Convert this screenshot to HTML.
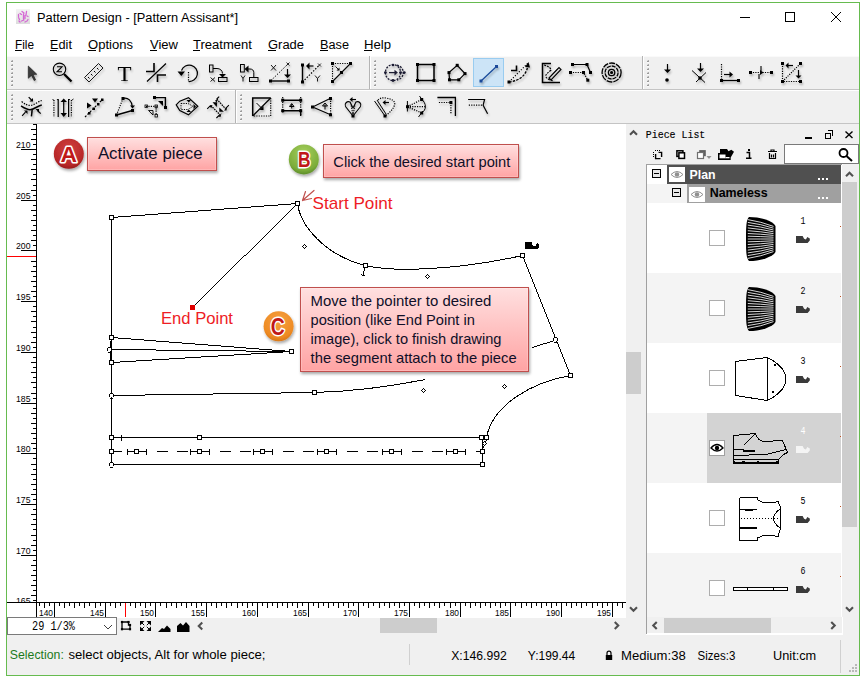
<!DOCTYPE html>
<html><head><meta charset="utf-8"><style>
html,body{margin:0;padding:0;background:#fff;}
svg{display:block;}
</style></head><body>
<svg width="868" height="681" viewBox="0 0 868 681" shape-rendering="auto">
<rect x="0" y="0" width="868" height="681" fill="#fff" />
<rect x="7" y="56" width="852" height="68" fill="#f0f0f0" />
<g shape-rendering="crispEdges">
<rect x="7" y="56" width="852" height="1" fill="#fafafa" />
<rect x="7" y="89" width="852" height="1" fill="#c4c4c4" />
<rect x="7" y="90" width="852" height="1" fill="#ffffff" />
<rect x="7" y="123" width="852" height="1" fill="#c4c4c4" />
<rect x="369" y="56" width="1" height="33" fill="#b4b4b4" />
<rect x="370" y="56" width="1" height="33" fill="#ffffff" />
<rect x="642" y="56" width="1" height="33" fill="#b4b4b4" />
<rect x="643" y="56" width="1" height="33" fill="#ffffff" />
<rect x="235" y="90" width="1" height="33" fill="#b4b4b4" />
<rect x="236" y="90" width="1" height="33" fill="#ffffff" />
<rect x="11" y="61" width="2" height="1" fill="#9a9a9a"/><rect x="12" y="60" width="1" height="1" fill="#b0b0b0"/><rect x="11" y="60" width="1" height="1" fill="#dadada"/><rect x="11" y="62" width="2" height="1" fill="#fafafa"/>
<rect x="11" y="65" width="2" height="1" fill="#9a9a9a"/><rect x="12" y="64" width="1" height="1" fill="#b0b0b0"/><rect x="11" y="64" width="1" height="1" fill="#dadada"/><rect x="11" y="66" width="2" height="1" fill="#fafafa"/>
<rect x="11" y="69" width="2" height="1" fill="#9a9a9a"/><rect x="12" y="68" width="1" height="1" fill="#b0b0b0"/><rect x="11" y="68" width="1" height="1" fill="#dadada"/><rect x="11" y="70" width="2" height="1" fill="#fafafa"/>
<rect x="11" y="73" width="2" height="1" fill="#9a9a9a"/><rect x="12" y="72" width="1" height="1" fill="#b0b0b0"/><rect x="11" y="72" width="1" height="1" fill="#dadada"/><rect x="11" y="74" width="2" height="1" fill="#fafafa"/>
<rect x="11" y="77" width="2" height="1" fill="#9a9a9a"/><rect x="12" y="76" width="1" height="1" fill="#b0b0b0"/><rect x="11" y="76" width="1" height="1" fill="#dadada"/><rect x="11" y="78" width="2" height="1" fill="#fafafa"/>
<rect x="11" y="81" width="2" height="1" fill="#9a9a9a"/><rect x="12" y="80" width="1" height="1" fill="#b0b0b0"/><rect x="11" y="80" width="1" height="1" fill="#dadada"/><rect x="11" y="82" width="2" height="1" fill="#fafafa"/>
<rect x="11" y="85" width="2" height="1" fill="#9a9a9a"/><rect x="12" y="84" width="1" height="1" fill="#b0b0b0"/><rect x="11" y="84" width="1" height="1" fill="#dadada"/><rect x="11" y="86" width="2" height="1" fill="#fafafa"/>
<rect x="374" y="61" width="2" height="1" fill="#9a9a9a"/><rect x="375" y="60" width="1" height="1" fill="#b0b0b0"/><rect x="374" y="60" width="1" height="1" fill="#dadada"/><rect x="374" y="62" width="2" height="1" fill="#fafafa"/>
<rect x="374" y="65" width="2" height="1" fill="#9a9a9a"/><rect x="375" y="64" width="1" height="1" fill="#b0b0b0"/><rect x="374" y="64" width="1" height="1" fill="#dadada"/><rect x="374" y="66" width="2" height="1" fill="#fafafa"/>
<rect x="374" y="69" width="2" height="1" fill="#9a9a9a"/><rect x="375" y="68" width="1" height="1" fill="#b0b0b0"/><rect x="374" y="68" width="1" height="1" fill="#dadada"/><rect x="374" y="70" width="2" height="1" fill="#fafafa"/>
<rect x="374" y="73" width="2" height="1" fill="#9a9a9a"/><rect x="375" y="72" width="1" height="1" fill="#b0b0b0"/><rect x="374" y="72" width="1" height="1" fill="#dadada"/><rect x="374" y="74" width="2" height="1" fill="#fafafa"/>
<rect x="374" y="77" width="2" height="1" fill="#9a9a9a"/><rect x="375" y="76" width="1" height="1" fill="#b0b0b0"/><rect x="374" y="76" width="1" height="1" fill="#dadada"/><rect x="374" y="78" width="2" height="1" fill="#fafafa"/>
<rect x="374" y="81" width="2" height="1" fill="#9a9a9a"/><rect x="375" y="80" width="1" height="1" fill="#b0b0b0"/><rect x="374" y="80" width="1" height="1" fill="#dadada"/><rect x="374" y="82" width="2" height="1" fill="#fafafa"/>
<rect x="374" y="85" width="2" height="1" fill="#9a9a9a"/><rect x="375" y="84" width="1" height="1" fill="#b0b0b0"/><rect x="374" y="84" width="1" height="1" fill="#dadada"/><rect x="374" y="86" width="2" height="1" fill="#fafafa"/>
<rect x="647" y="61" width="2" height="1" fill="#9a9a9a"/><rect x="648" y="60" width="1" height="1" fill="#b0b0b0"/><rect x="647" y="60" width="1" height="1" fill="#dadada"/><rect x="647" y="62" width="2" height="1" fill="#fafafa"/>
<rect x="647" y="65" width="2" height="1" fill="#9a9a9a"/><rect x="648" y="64" width="1" height="1" fill="#b0b0b0"/><rect x="647" y="64" width="1" height="1" fill="#dadada"/><rect x="647" y="66" width="2" height="1" fill="#fafafa"/>
<rect x="647" y="69" width="2" height="1" fill="#9a9a9a"/><rect x="648" y="68" width="1" height="1" fill="#b0b0b0"/><rect x="647" y="68" width="1" height="1" fill="#dadada"/><rect x="647" y="70" width="2" height="1" fill="#fafafa"/>
<rect x="647" y="73" width="2" height="1" fill="#9a9a9a"/><rect x="648" y="72" width="1" height="1" fill="#b0b0b0"/><rect x="647" y="72" width="1" height="1" fill="#dadada"/><rect x="647" y="74" width="2" height="1" fill="#fafafa"/>
<rect x="647" y="77" width="2" height="1" fill="#9a9a9a"/><rect x="648" y="76" width="1" height="1" fill="#b0b0b0"/><rect x="647" y="76" width="1" height="1" fill="#dadada"/><rect x="647" y="78" width="2" height="1" fill="#fafafa"/>
<rect x="647" y="81" width="2" height="1" fill="#9a9a9a"/><rect x="648" y="80" width="1" height="1" fill="#b0b0b0"/><rect x="647" y="80" width="1" height="1" fill="#dadada"/><rect x="647" y="82" width="2" height="1" fill="#fafafa"/>
<rect x="647" y="85" width="2" height="1" fill="#9a9a9a"/><rect x="648" y="84" width="1" height="1" fill="#b0b0b0"/><rect x="647" y="84" width="1" height="1" fill="#dadada"/><rect x="647" y="86" width="2" height="1" fill="#fafafa"/>
<rect x="11" y="95" width="2" height="1" fill="#9a9a9a"/><rect x="12" y="94" width="1" height="1" fill="#b0b0b0"/><rect x="11" y="94" width="1" height="1" fill="#dadada"/><rect x="11" y="96" width="2" height="1" fill="#fafafa"/>
<rect x="11" y="99" width="2" height="1" fill="#9a9a9a"/><rect x="12" y="98" width="1" height="1" fill="#b0b0b0"/><rect x="11" y="98" width="1" height="1" fill="#dadada"/><rect x="11" y="100" width="2" height="1" fill="#fafafa"/>
<rect x="11" y="103" width="2" height="1" fill="#9a9a9a"/><rect x="12" y="102" width="1" height="1" fill="#b0b0b0"/><rect x="11" y="102" width="1" height="1" fill="#dadada"/><rect x="11" y="104" width="2" height="1" fill="#fafafa"/>
<rect x="11" y="107" width="2" height="1" fill="#9a9a9a"/><rect x="12" y="106" width="1" height="1" fill="#b0b0b0"/><rect x="11" y="106" width="1" height="1" fill="#dadada"/><rect x="11" y="108" width="2" height="1" fill="#fafafa"/>
<rect x="11" y="111" width="2" height="1" fill="#9a9a9a"/><rect x="12" y="110" width="1" height="1" fill="#b0b0b0"/><rect x="11" y="110" width="1" height="1" fill="#dadada"/><rect x="11" y="112" width="2" height="1" fill="#fafafa"/>
<rect x="11" y="115" width="2" height="1" fill="#9a9a9a"/><rect x="12" y="114" width="1" height="1" fill="#b0b0b0"/><rect x="11" y="114" width="1" height="1" fill="#dadada"/><rect x="11" y="116" width="2" height="1" fill="#fafafa"/>
<rect x="11" y="119" width="2" height="1" fill="#9a9a9a"/><rect x="12" y="118" width="1" height="1" fill="#b0b0b0"/><rect x="11" y="118" width="1" height="1" fill="#dadada"/><rect x="11" y="120" width="2" height="1" fill="#fafafa"/>
<rect x="240" y="95" width="2" height="1" fill="#9a9a9a"/><rect x="241" y="94" width="1" height="1" fill="#b0b0b0"/><rect x="240" y="94" width="1" height="1" fill="#dadada"/><rect x="240" y="96" width="2" height="1" fill="#fafafa"/>
<rect x="240" y="99" width="2" height="1" fill="#9a9a9a"/><rect x="241" y="98" width="1" height="1" fill="#b0b0b0"/><rect x="240" y="98" width="1" height="1" fill="#dadada"/><rect x="240" y="100" width="2" height="1" fill="#fafafa"/>
<rect x="240" y="103" width="2" height="1" fill="#9a9a9a"/><rect x="241" y="102" width="1" height="1" fill="#b0b0b0"/><rect x="240" y="102" width="1" height="1" fill="#dadada"/><rect x="240" y="104" width="2" height="1" fill="#fafafa"/>
<rect x="240" y="107" width="2" height="1" fill="#9a9a9a"/><rect x="241" y="106" width="1" height="1" fill="#b0b0b0"/><rect x="240" y="106" width="1" height="1" fill="#dadada"/><rect x="240" y="108" width="2" height="1" fill="#fafafa"/>
<rect x="240" y="111" width="2" height="1" fill="#9a9a9a"/><rect x="241" y="110" width="1" height="1" fill="#b0b0b0"/><rect x="240" y="110" width="1" height="1" fill="#dadada"/><rect x="240" y="112" width="2" height="1" fill="#fafafa"/>
<rect x="240" y="115" width="2" height="1" fill="#9a9a9a"/><rect x="241" y="114" width="1" height="1" fill="#b0b0b0"/><rect x="240" y="114" width="1" height="1" fill="#dadada"/><rect x="240" y="116" width="2" height="1" fill="#fafafa"/>
<rect x="240" y="119" width="2" height="1" fill="#9a9a9a"/><rect x="241" y="118" width="1" height="1" fill="#b0b0b0"/><rect x="240" y="118" width="1" height="1" fill="#dadada"/><rect x="240" y="120" width="2" height="1" fill="#fafafa"/>
<rect x="473.5" y="58.5" width="30" height="28" fill="#cce4f7" stroke="#99ccf0" stroke-width="1" />
</g>
<rect x="7" y="124" width="852" height="551" fill="#f0f0f0" />
<rect x="7" y="124" width="619" height="494" fill="#fff" />
<g>
<defs><linearGradient id="ig" x1="0" y1="0" x2="0" y2="1"><stop offset="0" stop-color="#f4f4f4"/><stop offset="1" stop-color="#dcdcdc"/></linearGradient></defs>
<rect x="16" y="9" width="14" height="15" fill="url(#ig)" />
<g stroke="#d050d0" stroke-width="1.3" fill="none" stroke-linecap="round" opacity="0.85">
<path d="M22,11.5L24,13M26.5,11.5L26,15M23.5,14V19M25,15.5V18.5M20,13.5L21.5,14.5M18.5,14.5V16.5M18.5,17.5L19.5,19.5M19,21L20,22M21.5,21L24,20M25,22L26,21.5M27,21L28,19.5M27,16L28,16.5"/>
</g>
<text x="37" y="22" font-family="Liberation Sans" font-size="12" fill="#000" font-weight="normal" text-anchor="start" textLength="201" lengthAdjust="spacingAndGlyphs" >Pattern Design - [Pattern Assisant*]</text>
<line x1="740" y1="17.5" x2="750" y2="17.5" stroke="#000" stroke-width="1" />
<rect x="785.5" y="12.5" width="9" height="9" fill="none" stroke="#000" stroke-width="1" />
<line x1="831" y1="12" x2="841" y2="22" stroke="#000" stroke-width="1" />
<line x1="841" y1="12" x2="831" y2="22" stroke="#000" stroke-width="1" />
</g>
<text x="15" y="49" font-family="Liberation Sans" font-size="12" fill="#000" font-weight="normal" text-anchor="start" textLength="19" lengthAdjust="spacingAndGlyphs" >File</text>
<rect x="15" y="50" width="7" height="1" fill="#000"/>
<text x="50" y="49" font-family="Liberation Sans" font-size="12" fill="#000" font-weight="normal" text-anchor="start" textLength="22" lengthAdjust="spacingAndGlyphs" >Edit</text>
<rect x="50" y="50" width="7" height="1" fill="#000"/>
<text x="88" y="49" font-family="Liberation Sans" font-size="12" fill="#000" font-weight="normal" text-anchor="start" textLength="45" lengthAdjust="spacingAndGlyphs" >Options</text>
<rect x="88" y="50" width="8" height="1" fill="#000"/>
<text x="150" y="49" font-family="Liberation Sans" font-size="12" fill="#000" font-weight="normal" text-anchor="start" textLength="28" lengthAdjust="spacingAndGlyphs" >View</text>
<rect x="150" y="50" width="7" height="1" fill="#000"/>
<text x="193" y="49" font-family="Liberation Sans" font-size="12" fill="#000" font-weight="normal" text-anchor="start" textLength="59" lengthAdjust="spacingAndGlyphs" >Treatment</text>
<rect x="193" y="50" width="7" height="1" fill="#000"/>
<text x="268" y="49" font-family="Liberation Sans" font-size="12" fill="#000" font-weight="normal" text-anchor="start" textLength="36" lengthAdjust="spacingAndGlyphs" >Grade</text>
<rect x="268" y="50" width="8" height="1" fill="#000"/>
<text x="320" y="49" font-family="Liberation Sans" font-size="12" fill="#000" font-weight="normal" text-anchor="start" textLength="29" lengthAdjust="spacingAndGlyphs" >Base</text>
<rect x="320" y="50" width="8" height="1" fill="#000"/>
<text x="364" y="49" font-family="Liberation Sans" font-size="12" fill="#000" font-weight="normal" text-anchor="start" textLength="27" lengthAdjust="spacingAndGlyphs" >Help</text>
<rect x="364" y="50" width="8" height="1" fill="#000"/>
<g shape-rendering="crispEdges">
<line x1="36.5" y1="124" x2="36.5" y2="617" stroke="#000" stroke-width="1" />
<line x1="7" y1="602.5" x2="626" y2="602.5" stroke="#000" stroke-width="1" />
<rect x="33" y="124" width="3" height="1" fill="#000"/>
<rect x="31" y="129" width="5" height="1" fill="#000"/>
<rect x="33" y="134" width="3" height="1" fill="#000"/>
<rect x="31" y="139" width="5" height="1" fill="#000"/>
<rect x="33" y="144" width="3" height="1" fill="#000"/>
<rect x="21" y="149" width="15" height="1" fill="#000"/>
<rect x="33" y="154" width="3" height="1" fill="#000"/>
<rect x="31" y="159" width="5" height="1" fill="#000"/>
<rect x="33" y="164" width="3" height="1" fill="#000"/>
<rect x="31" y="169" width="5" height="1" fill="#000"/>
<rect x="33" y="174" width="3" height="1" fill="#000"/>
<rect x="31" y="179" width="5" height="1" fill="#000"/>
<rect x="33" y="185" width="3" height="1" fill="#000"/>
<rect x="31" y="190" width="5" height="1" fill="#000"/>
<rect x="33" y="195" width="3" height="1" fill="#000"/>
<rect x="21" y="200" width="15" height="1" fill="#000"/>
<rect x="33" y="205" width="3" height="1" fill="#000"/>
<rect x="31" y="210" width="5" height="1" fill="#000"/>
<rect x="33" y="215" width="3" height="1" fill="#000"/>
<rect x="31" y="220" width="5" height="1" fill="#000"/>
<rect x="33" y="225" width="3" height="1" fill="#000"/>
<rect x="31" y="230" width="5" height="1" fill="#000"/>
<rect x="33" y="235" width="3" height="1" fill="#000"/>
<rect x="31" y="240" width="5" height="1" fill="#000"/>
<rect x="33" y="245" width="3" height="1" fill="#000"/>
<rect x="21" y="250" width="15" height="1" fill="#000"/>
<rect x="33" y="256" width="3" height="1" fill="#000"/>
<rect x="31" y="261" width="5" height="1" fill="#000"/>
<rect x="33" y="266" width="3" height="1" fill="#000"/>
<rect x="31" y="271" width="5" height="1" fill="#000"/>
<rect x="33" y="276" width="3" height="1" fill="#000"/>
<rect x="31" y="281" width="5" height="1" fill="#000"/>
<rect x="33" y="286" width="3" height="1" fill="#000"/>
<rect x="31" y="291" width="5" height="1" fill="#000"/>
<rect x="33" y="296" width="3" height="1" fill="#000"/>
<rect x="21" y="301" width="15" height="1" fill="#000"/>
<rect x="33" y="306" width="3" height="1" fill="#000"/>
<rect x="31" y="311" width="5" height="1" fill="#000"/>
<rect x="33" y="316" width="3" height="1" fill="#000"/>
<rect x="31" y="321" width="5" height="1" fill="#000"/>
<rect x="33" y="327" width="3" height="1" fill="#000"/>
<rect x="31" y="332" width="5" height="1" fill="#000"/>
<rect x="33" y="337" width="3" height="1" fill="#000"/>
<rect x="31" y="342" width="5" height="1" fill="#000"/>
<rect x="33" y="347" width="3" height="1" fill="#000"/>
<rect x="21" y="352" width="15" height="1" fill="#000"/>
<rect x="33" y="357" width="3" height="1" fill="#000"/>
<rect x="31" y="362" width="5" height="1" fill="#000"/>
<rect x="33" y="367" width="3" height="1" fill="#000"/>
<rect x="31" y="372" width="5" height="1" fill="#000"/>
<rect x="33" y="377" width="3" height="1" fill="#000"/>
<rect x="31" y="382" width="5" height="1" fill="#000"/>
<rect x="33" y="387" width="3" height="1" fill="#000"/>
<rect x="31" y="393" width="5" height="1" fill="#000"/>
<rect x="33" y="398" width="3" height="1" fill="#000"/>
<rect x="21" y="403" width="15" height="1" fill="#000"/>
<rect x="33" y="408" width="3" height="1" fill="#000"/>
<rect x="31" y="413" width="5" height="1" fill="#000"/>
<rect x="33" y="418" width="3" height="1" fill="#000"/>
<rect x="31" y="423" width="5" height="1" fill="#000"/>
<rect x="33" y="428" width="3" height="1" fill="#000"/>
<rect x="31" y="433" width="5" height="1" fill="#000"/>
<rect x="33" y="438" width="3" height="1" fill="#000"/>
<rect x="31" y="443" width="5" height="1" fill="#000"/>
<rect x="33" y="448" width="3" height="1" fill="#000"/>
<rect x="21" y="453" width="15" height="1" fill="#000"/>
<rect x="33" y="458" width="3" height="1" fill="#000"/>
<rect x="31" y="464" width="5" height="1" fill="#000"/>
<rect x="33" y="469" width="3" height="1" fill="#000"/>
<rect x="31" y="474" width="5" height="1" fill="#000"/>
<rect x="33" y="479" width="3" height="1" fill="#000"/>
<rect x="31" y="484" width="5" height="1" fill="#000"/>
<rect x="33" y="489" width="3" height="1" fill="#000"/>
<rect x="31" y="494" width="5" height="1" fill="#000"/>
<rect x="33" y="499" width="3" height="1" fill="#000"/>
<rect x="21" y="504" width="15" height="1" fill="#000"/>
<rect x="33" y="509" width="3" height="1" fill="#000"/>
<rect x="31" y="514" width="5" height="1" fill="#000"/>
<rect x="33" y="519" width="3" height="1" fill="#000"/>
<rect x="31" y="524" width="5" height="1" fill="#000"/>
<rect x="33" y="529" width="3" height="1" fill="#000"/>
<rect x="31" y="535" width="5" height="1" fill="#000"/>
<rect x="33" y="540" width="3" height="1" fill="#000"/>
<rect x="31" y="545" width="5" height="1" fill="#000"/>
<rect x="33" y="550" width="3" height="1" fill="#000"/>
<rect x="21" y="555" width="15" height="1" fill="#000"/>
<rect x="33" y="560" width="3" height="1" fill="#000"/>
<rect x="31" y="565" width="5" height="1" fill="#000"/>
<rect x="33" y="570" width="3" height="1" fill="#000"/>
<rect x="31" y="575" width="5" height="1" fill="#000"/>
<rect x="33" y="580" width="3" height="1" fill="#000"/>
<rect x="31" y="585" width="5" height="1" fill="#000"/>
<rect x="33" y="590" width="3" height="1" fill="#000"/>
<rect x="31" y="595" width="5" height="1" fill="#000"/>
<rect x="33" y="600" width="3" height="1" fill="#000"/>
<rect x="39" y="603" width="1" height="3" fill="#000"/>
<rect x="44" y="603" width="1" height="5" fill="#000"/>
<rect x="49" y="603" width="1" height="3" fill="#000"/>
<rect x="54" y="603" width="1" height="14" fill="#000"/>
<rect x="59" y="603" width="1" height="3" fill="#000"/>
<rect x="64" y="603" width="1" height="5" fill="#000"/>
<rect x="69" y="603" width="1" height="3" fill="#000"/>
<rect x="74" y="603" width="1" height="5" fill="#000"/>
<rect x="79" y="603" width="1" height="3" fill="#000"/>
<rect x="84" y="603" width="1" height="5" fill="#000"/>
<rect x="89" y="603" width="1" height="3" fill="#000"/>
<rect x="95" y="603" width="1" height="5" fill="#000"/>
<rect x="100" y="603" width="1" height="3" fill="#000"/>
<rect x="105" y="603" width="1" height="14" fill="#000"/>
<rect x="110" y="603" width="1" height="3" fill="#000"/>
<rect x="115" y="603" width="1" height="5" fill="#000"/>
<rect x="120" y="603" width="1" height="3" fill="#000"/>
<rect x="125" y="603" width="1" height="5" fill="#000"/>
<rect x="130" y="603" width="1" height="3" fill="#000"/>
<rect x="135" y="603" width="1" height="5" fill="#000"/>
<rect x="140" y="603" width="1" height="3" fill="#000"/>
<rect x="145" y="603" width="1" height="5" fill="#000"/>
<rect x="150" y="603" width="1" height="3" fill="#000"/>
<rect x="155" y="603" width="1" height="14" fill="#000"/>
<rect x="160" y="603" width="1" height="3" fill="#000"/>
<rect x="166" y="603" width="1" height="5" fill="#000"/>
<rect x="171" y="603" width="1" height="3" fill="#000"/>
<rect x="176" y="603" width="1" height="5" fill="#000"/>
<rect x="181" y="603" width="1" height="3" fill="#000"/>
<rect x="186" y="603" width="1" height="5" fill="#000"/>
<rect x="191" y="603" width="1" height="3" fill="#000"/>
<rect x="196" y="603" width="1" height="5" fill="#000"/>
<rect x="201" y="603" width="1" height="3" fill="#000"/>
<rect x="206" y="603" width="1" height="14" fill="#000"/>
<rect x="211" y="603" width="1" height="3" fill="#000"/>
<rect x="216" y="603" width="1" height="5" fill="#000"/>
<rect x="221" y="603" width="1" height="3" fill="#000"/>
<rect x="226" y="603" width="1" height="5" fill="#000"/>
<rect x="231" y="603" width="1" height="3" fill="#000"/>
<rect x="237" y="603" width="1" height="5" fill="#000"/>
<rect x="242" y="603" width="1" height="3" fill="#000"/>
<rect x="247" y="603" width="1" height="5" fill="#000"/>
<rect x="252" y="603" width="1" height="3" fill="#000"/>
<rect x="257" y="603" width="1" height="14" fill="#000"/>
<rect x="262" y="603" width="1" height="3" fill="#000"/>
<rect x="267" y="603" width="1" height="5" fill="#000"/>
<rect x="272" y="603" width="1" height="3" fill="#000"/>
<rect x="277" y="603" width="1" height="5" fill="#000"/>
<rect x="282" y="603" width="1" height="3" fill="#000"/>
<rect x="287" y="603" width="1" height="5" fill="#000"/>
<rect x="292" y="603" width="1" height="3" fill="#000"/>
<rect x="297" y="603" width="1" height="5" fill="#000"/>
<rect x="302" y="603" width="1" height="3" fill="#000"/>
<rect x="308" y="603" width="1" height="14" fill="#000"/>
<rect x="313" y="603" width="1" height="3" fill="#000"/>
<rect x="318" y="603" width="1" height="5" fill="#000"/>
<rect x="323" y="603" width="1" height="3" fill="#000"/>
<rect x="328" y="603" width="1" height="5" fill="#000"/>
<rect x="333" y="603" width="1" height="3" fill="#000"/>
<rect x="338" y="603" width="1" height="5" fill="#000"/>
<rect x="343" y="603" width="1" height="3" fill="#000"/>
<rect x="348" y="603" width="1" height="5" fill="#000"/>
<rect x="353" y="603" width="1" height="3" fill="#000"/>
<rect x="358" y="603" width="1" height="14" fill="#000"/>
<rect x="363" y="603" width="1" height="3" fill="#000"/>
<rect x="368" y="603" width="1" height="5" fill="#000"/>
<rect x="373" y="603" width="1" height="3" fill="#000"/>
<rect x="379" y="603" width="1" height="5" fill="#000"/>
<rect x="384" y="603" width="1" height="3" fill="#000"/>
<rect x="389" y="603" width="1" height="5" fill="#000"/>
<rect x="394" y="603" width="1" height="3" fill="#000"/>
<rect x="399" y="603" width="1" height="5" fill="#000"/>
<rect x="404" y="603" width="1" height="3" fill="#000"/>
<rect x="409" y="603" width="1" height="14" fill="#000"/>
<rect x="414" y="603" width="1" height="3" fill="#000"/>
<rect x="419" y="603" width="1" height="5" fill="#000"/>
<rect x="424" y="603" width="1" height="3" fill="#000"/>
<rect x="429" y="603" width="1" height="5" fill="#000"/>
<rect x="434" y="603" width="1" height="3" fill="#000"/>
<rect x="439" y="603" width="1" height="5" fill="#000"/>
<rect x="444" y="603" width="1" height="3" fill="#000"/>
<rect x="450" y="603" width="1" height="5" fill="#000"/>
<rect x="455" y="603" width="1" height="3" fill="#000"/>
<rect x="460" y="603" width="1" height="14" fill="#000"/>
<rect x="465" y="603" width="1" height="3" fill="#000"/>
<rect x="470" y="603" width="1" height="5" fill="#000"/>
<rect x="475" y="603" width="1" height="3" fill="#000"/>
<rect x="480" y="603" width="1" height="5" fill="#000"/>
<rect x="485" y="603" width="1" height="3" fill="#000"/>
<rect x="490" y="603" width="1" height="5" fill="#000"/>
<rect x="495" y="603" width="1" height="3" fill="#000"/>
<rect x="500" y="603" width="1" height="5" fill="#000"/>
<rect x="505" y="603" width="1" height="3" fill="#000"/>
<rect x="510" y="603" width="1" height="14" fill="#000"/>
<rect x="515" y="603" width="1" height="3" fill="#000"/>
<rect x="521" y="603" width="1" height="5" fill="#000"/>
<rect x="526" y="603" width="1" height="3" fill="#000"/>
<rect x="531" y="603" width="1" height="5" fill="#000"/>
<rect x="536" y="603" width="1" height="3" fill="#000"/>
<rect x="541" y="603" width="1" height="5" fill="#000"/>
<rect x="546" y="603" width="1" height="3" fill="#000"/>
<rect x="551" y="603" width="1" height="5" fill="#000"/>
<rect x="556" y="603" width="1" height="3" fill="#000"/>
<rect x="561" y="603" width="1" height="14" fill="#000"/>
<rect x="566" y="603" width="1" height="3" fill="#000"/>
<rect x="571" y="603" width="1" height="5" fill="#000"/>
<rect x="576" y="603" width="1" height="3" fill="#000"/>
<rect x="581" y="603" width="1" height="5" fill="#000"/>
<rect x="586" y="603" width="1" height="3" fill="#000"/>
<rect x="592" y="603" width="1" height="5" fill="#000"/>
<rect x="597" y="603" width="1" height="3" fill="#000"/>
<rect x="602" y="603" width="1" height="5" fill="#000"/>
<rect x="607" y="603" width="1" height="3" fill="#000"/>
<rect x="612" y="603" width="1" height="14" fill="#000"/>
<rect x="617" y="603" width="1" height="3" fill="#000"/>
<rect x="622" y="603" width="1" height="5" fill="#000"/>
<rect x="7" y="256" width="29" height="1" fill="#ff0000"/>
<rect x="125" y="603" width="1" height="14" fill="#ff0000"/>
</g>
<text x="16" y="147.9" font-family="Liberation Sans" font-size="8.5" fill="#000" font-weight="normal" text-anchor="start" textLength="14.5" lengthAdjust="spacingAndGlyphs" >210</text>
<text x="16" y="198.9" font-family="Liberation Sans" font-size="8.5" fill="#000" font-weight="normal" text-anchor="start" textLength="14.5" lengthAdjust="spacingAndGlyphs" >205</text>
<text x="16" y="248.9" font-family="Liberation Sans" font-size="8.5" fill="#000" font-weight="normal" text-anchor="start" textLength="14.5" lengthAdjust="spacingAndGlyphs" >200</text>
<text x="16" y="299.9" font-family="Liberation Sans" font-size="8.5" fill="#000" font-weight="normal" text-anchor="start" textLength="14.5" lengthAdjust="spacingAndGlyphs" >195</text>
<text x="16" y="350.9" font-family="Liberation Sans" font-size="8.5" fill="#000" font-weight="normal" text-anchor="start" textLength="14.5" lengthAdjust="spacingAndGlyphs" >190</text>
<text x="16" y="401.9" font-family="Liberation Sans" font-size="8.5" fill="#000" font-weight="normal" text-anchor="start" textLength="14.5" lengthAdjust="spacingAndGlyphs" >185</text>
<text x="16" y="451.9" font-family="Liberation Sans" font-size="8.5" fill="#000" font-weight="normal" text-anchor="start" textLength="14.5" lengthAdjust="spacingAndGlyphs" >180</text>
<text x="16" y="502.9" font-family="Liberation Sans" font-size="8.5" fill="#000" font-weight="normal" text-anchor="start" textLength="14.5" lengthAdjust="spacingAndGlyphs" >175</text>
<text x="16" y="553.9" font-family="Liberation Sans" font-size="8.5" fill="#000" font-weight="normal" text-anchor="start" textLength="14.5" lengthAdjust="spacingAndGlyphs" >170</text>
<svg x="7" y="590" width="29" height="12" overflow="hidden"><text x="9" y="14.200000000000045" font-family="Liberation Sans" font-size="8.5" fill="#000" textLength="14.5" lengthAdjust="spacingAndGlyphs">165</text></svg>
<text x="39" y="616" font-family="Liberation Sans" font-size="8.5" fill="#000" font-weight="normal" text-anchor="start" textLength="14" lengthAdjust="spacingAndGlyphs" >140</text>
<text x="90" y="616" font-family="Liberation Sans" font-size="8.5" fill="#000" font-weight="normal" text-anchor="start" textLength="14" lengthAdjust="spacingAndGlyphs" >145</text>
<text x="140" y="616" font-family="Liberation Sans" font-size="8.5" fill="#000" font-weight="normal" text-anchor="start" textLength="14" lengthAdjust="spacingAndGlyphs" >150</text>
<text x="191" y="616" font-family="Liberation Sans" font-size="8.5" fill="#000" font-weight="normal" text-anchor="start" textLength="14" lengthAdjust="spacingAndGlyphs" >155</text>
<text x="242" y="616" font-family="Liberation Sans" font-size="8.5" fill="#000" font-weight="normal" text-anchor="start" textLength="14" lengthAdjust="spacingAndGlyphs" >160</text>
<text x="293" y="616" font-family="Liberation Sans" font-size="8.5" fill="#000" font-weight="normal" text-anchor="start" textLength="14" lengthAdjust="spacingAndGlyphs" >165</text>
<text x="343" y="616" font-family="Liberation Sans" font-size="8.5" fill="#000" font-weight="normal" text-anchor="start" textLength="14" lengthAdjust="spacingAndGlyphs" >170</text>
<text x="394" y="616" font-family="Liberation Sans" font-size="8.5" fill="#000" font-weight="normal" text-anchor="start" textLength="14" lengthAdjust="spacingAndGlyphs" >175</text>
<text x="445" y="616" font-family="Liberation Sans" font-size="8.5" fill="#000" font-weight="normal" text-anchor="start" textLength="14" lengthAdjust="spacingAndGlyphs" >180</text>
<text x="495" y="616" font-family="Liberation Sans" font-size="8.5" fill="#000" font-weight="normal" text-anchor="start" textLength="14" lengthAdjust="spacingAndGlyphs" >185</text>
<text x="546" y="616" font-family="Liberation Sans" font-size="8.5" fill="#000" font-weight="normal" text-anchor="start" textLength="14" lengthAdjust="spacingAndGlyphs" >190</text>
<text x="597" y="616" font-family="Liberation Sans" font-size="8.5" fill="#000" font-weight="normal" text-anchor="start" textLength="14" lengthAdjust="spacingAndGlyphs" >195</text>
<g shape-rendering="crispEdges" fill="none" stroke="#000" stroke-width="1">
<path d="M297.5,203.5C300.5,226.5 325.5,255.5 365.5,265.5" />
<path d="M365.5,265.5C390.5,271.5 450.5,271.5 522.5,255.5" />
<path d="M570.5,375.5C530.5,382.5 492.5,405.5 486.5,437.5" />
<path d="M111.5,217.5L111.5,464.5" />
<path d="M110.5,340.5L110.5,360.5" />
<path d="M314.5,392.5C350.5,391.5 390.5,386.5 425.5,379.5" />
<path d="M111.5,437.5L486.5,437.5" />
<path d="M121.5,434.5L121.5,440.5" />
<path d="M111.5,464.5L482.5,464.5M482.5,437.5L482.5,464.5" />
<path d="M486.5,439.5L482.5,449.5" />
<path d="M111.5,451.5L121.5,451.5M127.5,451.5L146.5,451.5M127.5,448.5L127.5,454.5M146.5,448.5L146.5,454.5M190.5,451.5L209.5,451.5M190.5,448.5L190.5,454.5M209.5,448.5L209.5,454.5M253.5,451.5L272.5,451.5M253.5,448.5L253.5,454.5M272.5,448.5L272.5,454.5M317.5,451.5L336.5,451.5M317.5,448.5L317.5,454.5M336.5,448.5L336.5,454.5M382.5,451.5L401.5,451.5M382.5,448.5L382.5,454.5M401.5,448.5L401.5,454.5M446.5,451.5L465.5,451.5M446.5,448.5L446.5,454.5M465.5,448.5L465.5,454.5M156.5,451.5L167.5,451.5M176.5,451.5L187.5,451.5M219.5,451.5L230.5,451.5M239.5,451.5L250.5,451.5M282.5,451.5L293.5,451.5M302.5,451.5L313.5,451.5M346.5,451.5L357.5,451.5M366.5,451.5L377.5,451.5M411.5,451.5L422.5,451.5M431.5,451.5L442.5,451.5M475.5,451.5L482.5,451.5" />
</g>
<path d="M364,268h1v1h-1zM364,269h1v1h-1zM364,270h1v1h-1zM363,271h1v1h-1zM363,272h1v1h-1zM363,273h1v1h-1zM363,274h1v1h-1zM363,275h1v1h-1zM362,275h1v1h-1zM363,275h1v1h-1zM364,275h1v1h-1zM361,274h1v1h-1zM111,217h1v1h-1zM112,217h1v1h-1zM113,217h1v1h-1zM114,217h1v1h-1zM115,217h1v1h-1zM116,217h1v1h-1zM117,217h1v1h-1zM118,216h1v1h-1zM119,216h1v1h-1zM120,216h1v1h-1zM121,216h1v1h-1zM122,216h1v1h-1zM123,216h1v1h-1zM124,216h1v1h-1zM125,216h1v1h-1zM126,216h1v1h-1zM127,216h1v1h-1zM128,216h1v1h-1zM129,216h1v1h-1zM130,216h1v1h-1zM131,215h1v1h-1zM132,215h1v1h-1zM133,215h1v1h-1zM134,215h1v1h-1zM135,215h1v1h-1zM136,215h1v1h-1zM137,215h1v1h-1zM138,215h1v1h-1zM139,215h1v1h-1zM140,215h1v1h-1zM141,215h1v1h-1zM142,215h1v1h-1zM143,215h1v1h-1zM144,215h1v1h-1zM145,214h1v1h-1zM146,214h1v1h-1zM147,214h1v1h-1zM148,214h1v1h-1zM149,214h1v1h-1zM150,214h1v1h-1zM151,214h1v1h-1zM152,214h1v1h-1zM153,214h1v1h-1zM154,214h1v1h-1zM155,214h1v1h-1zM156,214h1v1h-1zM157,214h1v1h-1zM158,213h1v1h-1zM159,213h1v1h-1zM160,213h1v1h-1zM161,213h1v1h-1zM162,213h1v1h-1zM163,213h1v1h-1zM164,213h1v1h-1zM165,213h1v1h-1zM166,213h1v1h-1zM167,213h1v1h-1zM168,213h1v1h-1zM169,213h1v1h-1zM170,213h1v1h-1zM171,212h1v1h-1zM172,212h1v1h-1zM173,212h1v1h-1zM174,212h1v1h-1zM175,212h1v1h-1zM176,212h1v1h-1zM177,212h1v1h-1zM178,212h1v1h-1zM179,212h1v1h-1zM180,212h1v1h-1zM181,212h1v1h-1zM182,212h1v1h-1zM183,212h1v1h-1zM184,212h1v1h-1zM185,211h1v1h-1zM186,211h1v1h-1zM187,211h1v1h-1zM188,211h1v1h-1zM189,211h1v1h-1zM190,211h1v1h-1zM191,211h1v1h-1zM192,211h1v1h-1zM193,211h1v1h-1zM194,211h1v1h-1zM195,211h1v1h-1zM196,211h1v1h-1zM197,211h1v1h-1zM198,210h1v1h-1zM199,210h1v1h-1zM200,210h1v1h-1zM201,210h1v1h-1zM202,210h1v1h-1zM203,210h1v1h-1zM204,210h1v1h-1zM205,210h1v1h-1zM206,210h1v1h-1zM207,210h1v1h-1zM208,210h1v1h-1zM209,210h1v1h-1zM210,210h1v1h-1zM211,209h1v1h-1zM212,209h1v1h-1zM213,209h1v1h-1zM214,209h1v1h-1zM215,209h1v1h-1zM216,209h1v1h-1zM217,209h1v1h-1zM218,209h1v1h-1zM219,209h1v1h-1zM220,209h1v1h-1zM221,209h1v1h-1zM222,209h1v1h-1zM223,209h1v1h-1zM224,208h1v1h-1zM225,208h1v1h-1zM226,208h1v1h-1zM227,208h1v1h-1zM228,208h1v1h-1zM229,208h1v1h-1zM230,208h1v1h-1zM231,208h1v1h-1zM232,208h1v1h-1zM233,208h1v1h-1zM234,208h1v1h-1zM235,208h1v1h-1zM236,208h1v1h-1zM237,208h1v1h-1zM238,207h1v1h-1zM239,207h1v1h-1zM240,207h1v1h-1zM241,207h1v1h-1zM242,207h1v1h-1zM243,207h1v1h-1zM244,207h1v1h-1zM245,207h1v1h-1zM246,207h1v1h-1zM247,207h1v1h-1zM248,207h1v1h-1zM249,207h1v1h-1zM250,207h1v1h-1zM251,206h1v1h-1zM252,206h1v1h-1zM253,206h1v1h-1zM254,206h1v1h-1zM255,206h1v1h-1zM256,206h1v1h-1zM257,206h1v1h-1zM258,206h1v1h-1zM259,206h1v1h-1zM260,206h1v1h-1zM261,206h1v1h-1zM262,206h1v1h-1zM263,206h1v1h-1zM264,205h1v1h-1zM265,205h1v1h-1zM266,205h1v1h-1zM267,205h1v1h-1zM268,205h1v1h-1zM269,205h1v1h-1zM270,205h1v1h-1zM271,205h1v1h-1zM272,205h1v1h-1zM273,205h1v1h-1zM274,205h1v1h-1zM275,205h1v1h-1zM276,205h1v1h-1zM277,205h1v1h-1zM278,204h1v1h-1zM279,204h1v1h-1zM280,204h1v1h-1zM281,204h1v1h-1zM282,204h1v1h-1zM283,204h1v1h-1zM284,204h1v1h-1zM285,204h1v1h-1zM286,204h1v1h-1zM287,204h1v1h-1zM288,204h1v1h-1zM289,204h1v1h-1zM290,204h1v1h-1zM291,203h1v1h-1zM292,203h1v1h-1zM293,203h1v1h-1zM294,203h1v1h-1zM295,203h1v1h-1zM296,203h1v1h-1zM297,203h1v1h-1zM297,203h1v1h-1zM296,204h1v1h-1zM295,205h1v1h-1zM294,206h1v1h-1zM293,207h1v1h-1zM292,208h1v1h-1zM291,209h1v1h-1zM290,210h1v1h-1zM289,211h1v1h-1zM288,212h1v1h-1zM287,213h1v1h-1zM286,214h1v1h-1zM285,215h1v1h-1zM284,216h1v1h-1zM283,217h1v1h-1zM282,218h1v1h-1zM281,219h1v1h-1zM280,220h1v1h-1zM279,221h1v1h-1zM278,222h1v1h-1zM277,223h1v1h-1zM276,224h1v1h-1zM275,225h1v1h-1zM274,226h1v1h-1zM273,227h1v1h-1zM272,228h1v1h-1zM271,229h1v1h-1zM270,230h1v1h-1zM269,231h1v1h-1zM268,232h1v1h-1zM267,233h1v1h-1zM266,234h1v1h-1zM265,235h1v1h-1zM264,236h1v1h-1zM263,237h1v1h-1zM262,238h1v1h-1zM261,239h1v1h-1zM260,240h1v1h-1zM259,241h1v1h-1zM258,242h1v1h-1zM257,243h1v1h-1zM256,244h1v1h-1zM255,245h1v1h-1zM254,246h1v1h-1zM253,247h1v1h-1zM252,248h1v1h-1zM251,249h1v1h-1zM250,250h1v1h-1zM249,251h1v1h-1zM248,252h1v1h-1zM247,253h1v1h-1zM246,254h1v1h-1zM245,255h1v1h-1zM244,255h1v1h-1zM243,256h1v1h-1zM242,257h1v1h-1zM241,258h1v1h-1zM240,259h1v1h-1zM239,260h1v1h-1zM238,261h1v1h-1zM237,262h1v1h-1zM236,263h1v1h-1zM235,264h1v1h-1zM234,265h1v1h-1zM233,266h1v1h-1zM232,267h1v1h-1zM231,268h1v1h-1zM230,269h1v1h-1zM229,270h1v1h-1zM228,271h1v1h-1zM227,272h1v1h-1zM226,273h1v1h-1zM225,274h1v1h-1zM224,275h1v1h-1zM223,276h1v1h-1zM222,277h1v1h-1zM221,278h1v1h-1zM220,279h1v1h-1zM219,280h1v1h-1zM218,281h1v1h-1zM217,282h1v1h-1zM216,283h1v1h-1zM215,284h1v1h-1zM214,285h1v1h-1zM213,286h1v1h-1zM212,287h1v1h-1zM211,288h1v1h-1zM210,289h1v1h-1zM209,290h1v1h-1zM208,291h1v1h-1zM207,292h1v1h-1zM206,293h1v1h-1zM205,294h1v1h-1zM204,295h1v1h-1zM203,296h1v1h-1zM202,297h1v1h-1zM201,298h1v1h-1zM200,299h1v1h-1zM199,300h1v1h-1zM198,301h1v1h-1zM197,302h1v1h-1zM196,303h1v1h-1zM195,304h1v1h-1zM194,305h1v1h-1zM193,306h1v1h-1zM192,307h1v1h-1zM522,255h1v1h-1zM522,256h1v1h-1zM523,257h1v1h-1zM523,258h1v1h-1zM524,259h1v1h-1zM524,260h1v1h-1zM524,261h1v1h-1zM525,262h1v1h-1zM525,263h1v1h-1zM526,264h1v1h-1zM526,265h1v1h-1zM526,266h1v1h-1zM527,267h1v1h-1zM527,268h1v1h-1zM528,269h1v1h-1zM528,270h1v1h-1zM528,271h1v1h-1zM529,272h1v1h-1zM529,273h1v1h-1zM530,274h1v1h-1zM530,275h1v1h-1zM530,276h1v1h-1zM531,277h1v1h-1zM531,278h1v1h-1zM532,279h1v1h-1zM532,280h1v1h-1zM532,281h1v1h-1zM533,282h1v1h-1zM533,283h1v1h-1zM534,284h1v1h-1zM534,285h1v1h-1zM534,286h1v1h-1zM535,287h1v1h-1zM535,288h1v1h-1zM536,289h1v1h-1zM536,290h1v1h-1zM536,291h1v1h-1zM537,292h1v1h-1zM537,293h1v1h-1zM538,294h1v1h-1zM538,295h1v1h-1zM538,296h1v1h-1zM539,297h1v1h-1zM539,298h1v1h-1zM540,299h1v1h-1zM540,300h1v1h-1zM540,301h1v1h-1zM541,302h1v1h-1zM541,303h1v1h-1zM542,304h1v1h-1zM542,305h1v1h-1zM542,306h1v1h-1zM543,307h1v1h-1zM543,308h1v1h-1zM544,309h1v1h-1zM544,310h1v1h-1zM544,311h1v1h-1zM545,312h1v1h-1zM545,313h1v1h-1zM546,314h1v1h-1zM546,315h1v1h-1zM546,316h1v1h-1zM547,317h1v1h-1zM547,318h1v1h-1zM548,319h1v1h-1zM548,320h1v1h-1zM548,321h1v1h-1zM549,322h1v1h-1zM549,323h1v1h-1zM550,324h1v1h-1zM550,325h1v1h-1zM550,326h1v1h-1zM551,327h1v1h-1zM551,328h1v1h-1zM552,329h1v1h-1zM552,330h1v1h-1zM552,331h1v1h-1zM553,332h1v1h-1zM553,333h1v1h-1zM554,334h1v1h-1zM554,335h1v1h-1zM554,336h1v1h-1zM555,337h1v1h-1zM555,338h1v1h-1zM556,339h1v1h-1zM556,340h1v1h-1zM556,341h1v1h-1zM557,342h1v1h-1zM557,343h1v1h-1zM558,344h1v1h-1zM558,345h1v1h-1zM558,346h1v1h-1zM559,347h1v1h-1zM559,348h1v1h-1zM560,349h1v1h-1zM560,350h1v1h-1zM560,351h1v1h-1zM561,352h1v1h-1zM561,353h1v1h-1zM562,354h1v1h-1zM562,355h1v1h-1zM562,356h1v1h-1zM563,357h1v1h-1zM563,358h1v1h-1zM564,359h1v1h-1zM564,360h1v1h-1zM564,361h1v1h-1zM565,362h1v1h-1zM565,363h1v1h-1zM566,364h1v1h-1zM566,365h1v1h-1zM566,366h1v1h-1zM567,367h1v1h-1zM567,368h1v1h-1zM568,369h1v1h-1zM568,370h1v1h-1zM568,371h1v1h-1zM569,372h1v1h-1zM569,373h1v1h-1zM570,374h1v1h-1zM570,375h1v1h-1zM532,347h1v1h-1zM533,347h1v1h-1zM534,346h1v1h-1zM535,346h1v1h-1zM536,346h1v1h-1zM537,345h1v1h-1zM538,345h1v1h-1zM539,345h1v1h-1zM540,344h1v1h-1zM541,344h1v1h-1zM542,344h1v1h-1zM543,343h1v1h-1zM544,343h1v1h-1zM545,343h1v1h-1zM546,343h1v1h-1zM547,342h1v1h-1zM548,342h1v1h-1zM549,342h1v1h-1zM550,341h1v1h-1zM551,341h1v1h-1zM552,341h1v1h-1zM553,340h1v1h-1zM554,340h1v1h-1zM111,337h1v1h-1zM112,337h1v1h-1zM113,337h1v1h-1zM114,337h1v1h-1zM115,337h1v1h-1zM116,337h1v1h-1zM117,337h1v1h-1zM118,338h1v1h-1zM119,338h1v1h-1zM120,338h1v1h-1zM121,338h1v1h-1zM122,338h1v1h-1zM123,338h1v1h-1zM124,338h1v1h-1zM125,338h1v1h-1zM126,338h1v1h-1zM127,338h1v1h-1zM128,338h1v1h-1zM129,338h1v1h-1zM130,338h1v1h-1zM131,339h1v1h-1zM132,339h1v1h-1zM133,339h1v1h-1zM134,339h1v1h-1zM135,339h1v1h-1zM136,339h1v1h-1zM137,339h1v1h-1zM138,339h1v1h-1zM139,339h1v1h-1zM140,339h1v1h-1zM141,339h1v1h-1zM142,339h1v1h-1zM143,339h1v1h-1zM144,340h1v1h-1zM145,340h1v1h-1zM146,340h1v1h-1zM147,340h1v1h-1zM148,340h1v1h-1zM149,340h1v1h-1zM150,340h1v1h-1zM151,340h1v1h-1zM152,340h1v1h-1zM153,340h1v1h-1zM154,340h1v1h-1zM155,340h1v1h-1zM156,341h1v1h-1zM157,341h1v1h-1zM158,341h1v1h-1zM159,341h1v1h-1zM160,341h1v1h-1zM161,341h1v1h-1zM162,341h1v1h-1zM163,341h1v1h-1zM164,341h1v1h-1zM165,341h1v1h-1zM166,341h1v1h-1zM167,341h1v1h-1zM168,341h1v1h-1zM169,342h1v1h-1zM170,342h1v1h-1zM171,342h1v1h-1zM172,342h1v1h-1zM173,342h1v1h-1zM174,342h1v1h-1zM175,342h1v1h-1zM176,342h1v1h-1zM177,342h1v1h-1zM178,342h1v1h-1zM179,342h1v1h-1zM180,342h1v1h-1zM181,342h1v1h-1zM182,343h1v1h-1zM183,343h1v1h-1zM184,343h1v1h-1zM185,343h1v1h-1zM186,343h1v1h-1zM187,343h1v1h-1zM188,343h1v1h-1zM189,343h1v1h-1zM190,343h1v1h-1zM191,343h1v1h-1zM192,343h1v1h-1zM193,343h1v1h-1zM194,343h1v1h-1zM195,344h1v1h-1zM196,344h1v1h-1zM197,344h1v1h-1zM198,344h1v1h-1zM199,344h1v1h-1zM200,344h1v1h-1zM201,344h1v1h-1zM202,344h1v1h-1zM203,344h1v1h-1zM204,344h1v1h-1zM205,344h1v1h-1zM206,344h1v1h-1zM207,344h1v1h-1zM208,345h1v1h-1zM209,345h1v1h-1zM210,345h1v1h-1zM211,345h1v1h-1zM212,345h1v1h-1zM213,345h1v1h-1zM214,345h1v1h-1zM215,345h1v1h-1zM216,345h1v1h-1zM217,345h1v1h-1zM218,345h1v1h-1zM219,345h1v1h-1zM220,345h1v1h-1zM221,346h1v1h-1zM222,346h1v1h-1zM223,346h1v1h-1zM224,346h1v1h-1zM225,346h1v1h-1zM226,346h1v1h-1zM227,346h1v1h-1zM228,346h1v1h-1zM229,346h1v1h-1zM230,346h1v1h-1zM231,346h1v1h-1zM232,346h1v1h-1zM233,346h1v1h-1zM234,347h1v1h-1zM235,347h1v1h-1zM236,347h1v1h-1zM237,347h1v1h-1zM238,347h1v1h-1zM239,347h1v1h-1zM240,347h1v1h-1zM241,347h1v1h-1zM242,347h1v1h-1zM243,347h1v1h-1zM244,347h1v1h-1zM245,347h1v1h-1zM246,348h1v1h-1zM247,348h1v1h-1zM248,348h1v1h-1zM249,348h1v1h-1zM250,348h1v1h-1zM251,348h1v1h-1zM252,348h1v1h-1zM253,348h1v1h-1zM254,348h1v1h-1zM255,348h1v1h-1zM256,348h1v1h-1zM257,348h1v1h-1zM258,348h1v1h-1zM259,349h1v1h-1zM260,349h1v1h-1zM261,349h1v1h-1zM262,349h1v1h-1zM263,349h1v1h-1zM264,349h1v1h-1zM265,349h1v1h-1zM266,349h1v1h-1zM267,349h1v1h-1zM268,349h1v1h-1zM269,349h1v1h-1zM270,349h1v1h-1zM271,349h1v1h-1zM272,350h1v1h-1zM273,350h1v1h-1zM274,350h1v1h-1zM275,350h1v1h-1zM276,350h1v1h-1zM277,350h1v1h-1zM278,350h1v1h-1zM279,350h1v1h-1zM280,350h1v1h-1zM281,350h1v1h-1zM282,350h1v1h-1zM283,350h1v1h-1zM284,350h1v1h-1zM285,351h1v1h-1zM286,351h1v1h-1zM287,351h1v1h-1zM288,351h1v1h-1zM289,351h1v1h-1zM290,351h1v1h-1zM291,351h1v1h-1zM111,362h1v1h-1zM112,362h1v1h-1zM113,362h1v1h-1zM114,362h1v1h-1zM115,362h1v1h-1zM116,362h1v1h-1zM117,362h1v1h-1zM118,362h1v1h-1zM119,362h1v1h-1zM120,361h1v1h-1zM121,361h1v1h-1zM122,361h1v1h-1zM123,361h1v1h-1zM124,361h1v1h-1zM125,361h1v1h-1zM126,361h1v1h-1zM127,361h1v1h-1zM128,361h1v1h-1zM129,361h1v1h-1zM130,361h1v1h-1zM131,361h1v1h-1zM132,361h1v1h-1zM133,361h1v1h-1zM134,361h1v1h-1zM135,361h1v1h-1zM136,360h1v1h-1zM137,360h1v1h-1zM138,360h1v1h-1zM139,360h1v1h-1zM140,360h1v1h-1zM141,360h1v1h-1zM142,360h1v1h-1zM143,360h1v1h-1zM144,360h1v1h-1zM145,360h1v1h-1zM146,360h1v1h-1zM147,360h1v1h-1zM148,360h1v1h-1zM149,360h1v1h-1zM150,360h1v1h-1zM151,360h1v1h-1zM152,359h1v1h-1zM153,359h1v1h-1zM154,359h1v1h-1zM155,359h1v1h-1zM156,359h1v1h-1zM157,359h1v1h-1zM158,359h1v1h-1zM159,359h1v1h-1zM160,359h1v1h-1zM161,359h1v1h-1zM162,359h1v1h-1zM163,359h1v1h-1zM164,359h1v1h-1zM165,359h1v1h-1zM166,359h1v1h-1zM167,359h1v1h-1zM168,359h1v1h-1zM169,358h1v1h-1zM170,358h1v1h-1zM171,358h1v1h-1zM172,358h1v1h-1zM173,358h1v1h-1zM174,358h1v1h-1zM175,358h1v1h-1zM176,358h1v1h-1zM177,358h1v1h-1zM178,358h1v1h-1zM179,358h1v1h-1zM180,358h1v1h-1zM181,358h1v1h-1zM182,358h1v1h-1zM183,358h1v1h-1zM184,358h1v1h-1zM185,357h1v1h-1zM186,357h1v1h-1zM187,357h1v1h-1zM188,357h1v1h-1zM189,357h1v1h-1zM190,357h1v1h-1zM191,357h1v1h-1zM192,357h1v1h-1zM193,357h1v1h-1zM194,357h1v1h-1zM195,357h1v1h-1zM196,357h1v1h-1zM197,357h1v1h-1zM198,357h1v1h-1zM199,357h1v1h-1zM200,357h1v1h-1zM201,356h1v1h-1zM202,356h1v1h-1zM203,356h1v1h-1zM204,356h1v1h-1zM205,356h1v1h-1zM206,356h1v1h-1zM207,356h1v1h-1zM208,356h1v1h-1zM209,356h1v1h-1zM210,356h1v1h-1zM211,356h1v1h-1zM212,356h1v1h-1zM213,356h1v1h-1zM214,356h1v1h-1zM215,356h1v1h-1zM216,356h1v1h-1zM217,356h1v1h-1zM218,355h1v1h-1zM219,355h1v1h-1zM220,355h1v1h-1zM221,355h1v1h-1zM222,355h1v1h-1zM223,355h1v1h-1zM224,355h1v1h-1zM225,355h1v1h-1zM226,355h1v1h-1zM227,355h1v1h-1zM228,355h1v1h-1zM229,355h1v1h-1zM230,355h1v1h-1zM231,355h1v1h-1zM232,355h1v1h-1zM233,355h1v1h-1zM234,354h1v1h-1zM235,354h1v1h-1zM236,354h1v1h-1zM237,354h1v1h-1zM238,354h1v1h-1zM239,354h1v1h-1zM240,354h1v1h-1zM241,354h1v1h-1zM242,354h1v1h-1zM243,354h1v1h-1zM244,354h1v1h-1zM245,354h1v1h-1zM246,354h1v1h-1zM247,354h1v1h-1zM248,354h1v1h-1zM249,354h1v1h-1zM250,354h1v1h-1zM251,353h1v1h-1zM252,353h1v1h-1zM253,353h1v1h-1zM254,353h1v1h-1zM255,353h1v1h-1zM256,353h1v1h-1zM257,353h1v1h-1zM258,353h1v1h-1zM259,353h1v1h-1zM260,353h1v1h-1zM261,353h1v1h-1zM262,353h1v1h-1zM263,353h1v1h-1zM264,353h1v1h-1zM265,353h1v1h-1zM266,353h1v1h-1zM267,352h1v1h-1zM268,352h1v1h-1zM269,352h1v1h-1zM270,352h1v1h-1zM271,352h1v1h-1zM272,352h1v1h-1zM273,352h1v1h-1zM274,352h1v1h-1zM275,352h1v1h-1zM276,352h1v1h-1zM277,352h1v1h-1zM278,352h1v1h-1zM279,352h1v1h-1zM280,352h1v1h-1zM281,352h1v1h-1zM282,352h1v1h-1zM283,351h1v1h-1zM284,351h1v1h-1zM285,351h1v1h-1zM286,351h1v1h-1zM287,351h1v1h-1zM288,351h1v1h-1zM289,351h1v1h-1zM290,351h1v1h-1zM291,351h1v1h-1zM111,349h1v1h-1zM112,349h1v1h-1zM113,349h1v1h-1zM114,349h1v1h-1zM115,349h1v1h-1zM116,349h1v1h-1zM117,349h1v1h-1zM118,349h1v1h-1zM119,349h1v1h-1zM120,349h1v1h-1zM121,349h1v1h-1zM122,349h1v1h-1zM123,349h1v1h-1zM124,349h1v1h-1zM125,349h1v1h-1zM126,349h1v1h-1zM127,349h1v1h-1zM128,349h1v1h-1zM129,349h1v1h-1zM130,349h1v1h-1zM131,349h1v1h-1zM132,349h1v1h-1zM133,349h1v1h-1zM134,349h1v1h-1zM135,349h1v1h-1zM136,349h1v1h-1zM137,349h1v1h-1zM138,349h1v1h-1zM139,349h1v1h-1zM140,349h1v1h-1zM141,349h1v1h-1zM142,349h1v1h-1zM143,349h1v1h-1zM144,349h1v1h-1zM145,349h1v1h-1zM146,349h1v1h-1zM147,349h1v1h-1zM148,349h1v1h-1zM149,349h1v1h-1zM150,349h1v1h-1zM151,349h1v1h-1zM152,349h1v1h-1zM153,349h1v1h-1zM154,349h1v1h-1zM155,349h1v1h-1zM156,350h1v1h-1zM157,350h1v1h-1zM158,350h1v1h-1zM159,350h1v1h-1zM160,350h1v1h-1zM161,350h1v1h-1zM162,350h1v1h-1zM163,350h1v1h-1zM164,350h1v1h-1zM165,350h1v1h-1zM166,350h1v1h-1zM167,350h1v1h-1zM168,350h1v1h-1zM169,350h1v1h-1zM170,350h1v1h-1zM171,350h1v1h-1zM172,350h1v1h-1zM173,350h1v1h-1zM174,350h1v1h-1zM175,350h1v1h-1zM176,350h1v1h-1zM177,350h1v1h-1zM178,350h1v1h-1zM179,350h1v1h-1zM180,350h1v1h-1zM181,350h1v1h-1zM182,350h1v1h-1zM183,350h1v1h-1zM184,350h1v1h-1zM185,350h1v1h-1zM186,350h1v1h-1zM187,350h1v1h-1zM188,350h1v1h-1zM189,350h1v1h-1zM190,350h1v1h-1zM191,350h1v1h-1zM192,350h1v1h-1zM193,350h1v1h-1zM194,350h1v1h-1zM195,350h1v1h-1zM196,350h1v1h-1zM197,350h1v1h-1zM198,350h1v1h-1zM199,350h1v1h-1zM200,350h1v1h-1zM201,350h1v1h-1zM202,350h1v1h-1zM203,350h1v1h-1zM204,350h1v1h-1zM205,350h1v1h-1zM206,350h1v1h-1zM207,350h1v1h-1zM208,350h1v1h-1zM209,350h1v1h-1zM210,350h1v1h-1zM211,350h1v1h-1zM212,350h1v1h-1zM213,350h1v1h-1zM214,350h1v1h-1zM215,350h1v1h-1zM216,350h1v1h-1zM217,350h1v1h-1zM218,350h1v1h-1zM219,350h1v1h-1zM220,350h1v1h-1zM221,350h1v1h-1zM222,350h1v1h-1zM223,350h1v1h-1zM224,350h1v1h-1zM225,350h1v1h-1zM226,350h1v1h-1zM227,350h1v1h-1zM228,350h1v1h-1zM229,350h1v1h-1zM230,350h1v1h-1zM231,350h1v1h-1zM232,350h1v1h-1zM233,350h1v1h-1zM234,350h1v1h-1zM235,350h1v1h-1zM236,350h1v1h-1zM237,350h1v1h-1zM238,350h1v1h-1zM239,350h1v1h-1zM240,350h1v1h-1zM241,350h1v1h-1zM242,350h1v1h-1zM243,350h1v1h-1zM244,350h1v1h-1zM245,350h1v1h-1zM246,351h1v1h-1zM247,351h1v1h-1zM248,351h1v1h-1zM249,351h1v1h-1zM250,351h1v1h-1zM251,351h1v1h-1zM252,351h1v1h-1zM253,351h1v1h-1zM254,351h1v1h-1zM255,351h1v1h-1zM256,351h1v1h-1zM257,351h1v1h-1zM258,351h1v1h-1zM259,351h1v1h-1zM260,351h1v1h-1zM261,351h1v1h-1zM262,351h1v1h-1zM263,351h1v1h-1zM264,351h1v1h-1zM265,351h1v1h-1zM266,351h1v1h-1zM267,351h1v1h-1zM268,351h1v1h-1zM269,351h1v1h-1zM270,351h1v1h-1zM271,351h1v1h-1zM272,351h1v1h-1zM273,351h1v1h-1zM274,351h1v1h-1zM275,351h1v1h-1zM276,351h1v1h-1zM277,351h1v1h-1zM278,351h1v1h-1zM279,351h1v1h-1zM280,351h1v1h-1zM281,351h1v1h-1zM282,351h1v1h-1zM283,351h1v1h-1zM284,351h1v1h-1zM285,351h1v1h-1zM286,351h1v1h-1zM287,351h1v1h-1zM288,351h1v1h-1zM289,351h1v1h-1zM290,351h1v1h-1zM291,351h1v1h-1zM111,395h1v1h-1zM112,395h1v1h-1zM113,395h1v1h-1zM114,395h1v1h-1zM115,395h1v1h-1zM116,395h1v1h-1zM117,395h1v1h-1zM118,395h1v1h-1zM119,395h1v1h-1zM120,395h1v1h-1zM121,395h1v1h-1zM122,395h1v1h-1zM123,395h1v1h-1zM124,395h1v1h-1zM125,395h1v1h-1zM126,395h1v1h-1zM127,395h1v1h-1zM128,395h1v1h-1zM129,395h1v1h-1zM130,395h1v1h-1zM131,395h1v1h-1zM132,395h1v1h-1zM133,395h1v1h-1zM134,395h1v1h-1zM135,395h1v1h-1zM136,395h1v1h-1zM137,395h1v1h-1zM138,395h1v1h-1zM139,395h1v1h-1zM140,395h1v1h-1zM141,395h1v1h-1zM142,395h1v1h-1zM143,395h1v1h-1zM144,395h1v1h-1zM145,394h1v1h-1zM146,394h1v1h-1zM147,394h1v1h-1zM148,394h1v1h-1zM149,394h1v1h-1zM150,394h1v1h-1zM151,394h1v1h-1zM152,394h1v1h-1zM153,394h1v1h-1zM154,394h1v1h-1zM155,394h1v1h-1zM156,394h1v1h-1zM157,394h1v1h-1zM158,394h1v1h-1zM159,394h1v1h-1zM160,394h1v1h-1zM161,394h1v1h-1zM162,394h1v1h-1zM163,394h1v1h-1zM164,394h1v1h-1zM165,394h1v1h-1zM166,394h1v1h-1zM167,394h1v1h-1zM168,394h1v1h-1zM169,394h1v1h-1zM170,394h1v1h-1zM171,394h1v1h-1zM172,394h1v1h-1zM173,394h1v1h-1zM174,394h1v1h-1zM175,394h1v1h-1zM176,394h1v1h-1zM177,394h1v1h-1zM178,394h1v1h-1zM179,394h1v1h-1zM180,394h1v1h-1zM181,394h1v1h-1zM182,394h1v1h-1zM183,394h1v1h-1zM184,394h1v1h-1zM185,394h1v1h-1zM186,394h1v1h-1zM187,394h1v1h-1zM188,394h1v1h-1zM189,394h1v1h-1zM190,394h1v1h-1zM191,394h1v1h-1zM192,394h1v1h-1zM193,394h1v1h-1zM194,394h1v1h-1zM195,394h1v1h-1zM196,394h1v1h-1zM197,394h1v1h-1zM198,394h1v1h-1zM199,394h1v1h-1zM200,394h1v1h-1zM201,394h1v1h-1zM202,394h1v1h-1zM203,394h1v1h-1zM204,394h1v1h-1zM205,394h1v1h-1zM206,394h1v1h-1zM207,394h1v1h-1zM208,394h1v1h-1zM209,394h1v1h-1zM210,394h1v1h-1zM211,394h1v1h-1zM212,394h1v1h-1zM213,393h1v1h-1zM214,393h1v1h-1zM215,393h1v1h-1zM216,393h1v1h-1zM217,393h1v1h-1zM218,393h1v1h-1zM219,393h1v1h-1zM220,393h1v1h-1zM221,393h1v1h-1zM222,393h1v1h-1zM223,393h1v1h-1zM224,393h1v1h-1zM225,393h1v1h-1zM226,393h1v1h-1zM227,393h1v1h-1zM228,393h1v1h-1zM229,393h1v1h-1zM230,393h1v1h-1zM231,393h1v1h-1zM232,393h1v1h-1zM233,393h1v1h-1zM234,393h1v1h-1zM235,393h1v1h-1zM236,393h1v1h-1zM237,393h1v1h-1zM238,393h1v1h-1zM239,393h1v1h-1zM240,393h1v1h-1zM241,393h1v1h-1zM242,393h1v1h-1zM243,393h1v1h-1zM244,393h1v1h-1zM245,393h1v1h-1zM246,393h1v1h-1zM247,393h1v1h-1zM248,393h1v1h-1zM249,393h1v1h-1zM250,393h1v1h-1zM251,393h1v1h-1zM252,393h1v1h-1zM253,393h1v1h-1zM254,393h1v1h-1zM255,393h1v1h-1zM256,393h1v1h-1zM257,393h1v1h-1zM258,393h1v1h-1zM259,393h1v1h-1zM260,393h1v1h-1zM261,393h1v1h-1zM262,393h1v1h-1zM263,393h1v1h-1zM264,393h1v1h-1zM265,393h1v1h-1zM266,393h1v1h-1zM267,393h1v1h-1zM268,393h1v1h-1zM269,393h1v1h-1zM270,393h1v1h-1zM271,393h1v1h-1zM272,393h1v1h-1zM273,393h1v1h-1zM274,393h1v1h-1zM275,393h1v1h-1zM276,393h1v1h-1zM277,393h1v1h-1zM278,393h1v1h-1zM279,393h1v1h-1zM280,393h1v1h-1zM281,392h1v1h-1zM282,392h1v1h-1zM283,392h1v1h-1zM284,392h1v1h-1zM285,392h1v1h-1zM286,392h1v1h-1zM287,392h1v1h-1zM288,392h1v1h-1zM289,392h1v1h-1zM290,392h1v1h-1zM291,392h1v1h-1zM292,392h1v1h-1zM293,392h1v1h-1zM294,392h1v1h-1zM295,392h1v1h-1zM296,392h1v1h-1zM297,392h1v1h-1zM298,392h1v1h-1zM299,392h1v1h-1zM300,392h1v1h-1zM301,392h1v1h-1zM302,392h1v1h-1zM303,392h1v1h-1zM304,392h1v1h-1zM305,392h1v1h-1zM306,392h1v1h-1zM307,392h1v1h-1zM308,392h1v1h-1zM309,392h1v1h-1zM310,392h1v1h-1zM311,392h1v1h-1zM312,392h1v1h-1zM313,392h1v1h-1zM314,392h1v1h-1z" fill="#000" stroke="none" shape-rendering="crispEdges"/>
<g shape-rendering="crispEdges">
<rect x="134.5" y="449.5" width="4" height="4" fill="#fff" stroke="#000" stroke-width="1"/>
<rect x="197.5" y="449.5" width="4" height="4" fill="#fff" stroke="#000" stroke-width="1"/>
<rect x="260.5" y="449.5" width="4" height="4" fill="#fff" stroke="#000" stroke-width="1"/>
<rect x="324.5" y="449.5" width="4" height="4" fill="#fff" stroke="#000" stroke-width="1"/>
<rect x="389.5" y="449.5" width="4" height="4" fill="#fff" stroke="#000" stroke-width="1"/>
<rect x="453.5" y="449.5" width="4" height="4" fill="#fff" stroke="#000" stroke-width="1"/>
<rect x="109.5" y="215.5" width="4" height="4" fill="#fff" stroke="#000" stroke-width="1"/>
<rect x="295.5" y="201.5" width="4" height="4" fill="#fff" stroke="#000" stroke-width="1"/>
<rect x="363.5" y="263.5" width="4" height="4" fill="#fff" stroke="#000" stroke-width="1"/>
<rect x="520.5" y="253.5" width="4" height="4" fill="#fff" stroke="#000" stroke-width="1"/>
<rect x="568.5" y="373.5" width="4" height="4" fill="#fff" stroke="#000" stroke-width="1"/>
<rect x="484.5" y="435.5" width="4" height="4" fill="#fff" stroke="#000" stroke-width="1"/>
<rect x="479.5" y="435.5" width="4" height="4" fill="#fff" stroke="#000" stroke-width="1"/>
<rect x="109.5" y="435.5" width="4" height="4" fill="#fff" stroke="#000" stroke-width="1"/>
<rect x="197.5" y="435.5" width="4" height="4" fill="#fff" stroke="#000" stroke-width="1"/>
<rect x="109.5" y="449.5" width="4" height="4" fill="#fff" stroke="#000" stroke-width="1"/>
<rect x="480.5" y="449.5" width="4" height="4" fill="#fff" stroke="#000" stroke-width="1"/>
<rect x="480.5" y="462.5" width="4" height="4" fill="#fff" stroke="#000" stroke-width="1"/>
<rect x="109.5" y="335.5" width="4" height="4" fill="#fff" stroke="#000" stroke-width="1"/>
<rect x="109.5" y="360.5" width="4" height="4" fill="#fff" stroke="#000" stroke-width="1"/>
<rect x="289.5" y="349.5" width="4" height="4" fill="#fff" stroke="#000" stroke-width="1"/>
<rect x="312.5" y="390.5" width="4" height="4" fill="#fff" stroke="#000" stroke-width="1"/>
<path d="M108,347h3M108,352h3M107,348v3M111,348v3" stroke="#000" stroke-width="1" fill="none"/>
<rect x="108" y="348" width="3" height="3" fill="#fff"/>
<path d="M110,393h3M110,398h3M109,394v3M113,394v3" stroke="#000" stroke-width="1" fill="none"/>
<rect x="110" y="394" width="3" height="3" fill="#fff"/>
<path d="M110,462h3M110,467h3M109,463v3M113,463v3" stroke="#000" stroke-width="1" fill="none"/>
<rect x="110" y="463" width="3" height="3" fill="#fff"/>
<path d="M554,337h3M554,342h3M553,338v3M557,338v3" stroke="#000" stroke-width="1" fill="none"/>
<rect x="554" y="338" width="3" height="3" fill="#fff"/>
<path d="M304.5,244.5L306.5,246.5L304.5,248.5L302.5,246.5Z" stroke="#000" stroke-width="1" fill="#fff"/>
<path d="M427.5,274.5L429.5,276.5L427.5,278.5L425.5,276.5Z" stroke="#000" stroke-width="1" fill="#fff"/>
<path d="M423.5,388.5L425.5,390.5L423.5,392.5L421.5,390.5Z" stroke="#000" stroke-width="1" fill="#fff"/>
<path d="M504.5,384.5L506.5,386.5L504.5,388.5L502.5,386.5Z" stroke="#000" stroke-width="1" fill="#fff"/>
<path d="M484.5,441.5L486.5,443.5L484.5,445.5L482.5,443.5Z" stroke="#000" stroke-width="1" fill="#fff"/>
<rect x="190" y="305" width="5" height="5" fill="#e00000"/>
<path d="M525,242H532V244L533,245.5H536L537,243L539.3,244.3V247L537.2,249H525Z" fill="#000"/>
</g>
<g stroke="#c0504d" stroke-width="1.2" fill="none" stroke-linecap="round">
<path d="M302.5,200.5L314,190.5M302.5,200.5L305.5,191.5M302.5,200.5L311.5,198.5"/>
</g>
<text x="312.5" y="209.4" font-family="Liberation Sans" font-size="17" fill="#ee1c25" font-weight="normal" text-anchor="start" textLength="80" lengthAdjust="spacingAndGlyphs" >Start Point</text>
<text x="161" y="324.3" font-family="Liberation Sans" font-size="17" fill="#ee1c25" font-weight="normal" text-anchor="start" textLength="72" lengthAdjust="spacingAndGlyphs" >End Point</text>
<defs>
<linearGradient id="pk" x1="0" y1="0" x2="0" y2="1"><stop offset="0" stop-color="#ffe0e0"/><stop offset="1" stop-color="#ffa3a3"/></linearGradient>
<radialGradient id="gr" cx="0.5" cy="0.35" r="0.65"><stop offset="0" stop-color="#d04040"/><stop offset="0.8" stop-color="#b82828"/><stop offset="1" stop-color="#9a1c1c"/></radialGradient>
<radialGradient id="gg" cx="0.5" cy="0.3" r="0.7"><stop offset="0" stop-color="#a6d05e"/><stop offset="0.8" stop-color="#7cac3a"/><stop offset="1" stop-color="#5e8e2a"/></radialGradient>
<radialGradient id="go" cx="0.5" cy="0.3" r="0.7"><stop offset="0" stop-color="#f5a040"/><stop offset="0.8" stop-color="#ee8a22"/><stop offset="1" stop-color="#d87818"/></radialGradient>
<filter id="sh" x="-20%" y="-20%" width="150%" height="160%"><feGaussianBlur in="SourceAlpha" stdDeviation="1.5"/><feOffset dx="1" dy="2" result="b"/><feComponentTransfer><feFuncA type="linear" slope="0.35"/></feComponentTransfer><feMerge><feMergeNode/><feMergeNode in="SourceGraphic"/></feMerge></filter>
</defs>
<rect x="87.5" y="137.5" width="129" height="33" fill="url(#pk)" stroke="#c0504d" stroke-width="1" filter="url(#sh)"/>
<rect x="88.5" y="138.5" width="127" height="31" fill="none" stroke="#ffffff" stroke-opacity="0.2" stroke-width="1"/>
<text x="97.9" y="159" font-family="Liberation Sans" font-size="17" fill="#0f0f28" font-weight="normal" text-anchor="start" textLength="104.7" lengthAdjust="spacingAndGlyphs" >Activate piece</text>
<rect x="323.5" y="144.5" width="195" height="33" fill="url(#pk)" stroke="#c0504d" stroke-width="1" filter="url(#sh)"/>
<rect x="324.5" y="145.5" width="193" height="31" fill="none" stroke="#ffffff" stroke-opacity="0.2" stroke-width="1"/>
<text x="333.3" y="166.7" font-family="Liberation Sans" font-size="15" fill="#0f0f28" font-weight="normal" text-anchor="start" textLength="177" lengthAdjust="spacingAndGlyphs" >Click the desired start point</text>
<rect x="300.5" y="287.5" width="228" height="84" fill="url(#pk)" stroke="#c0504d" stroke-width="1" filter="url(#sh)"/>
<rect x="301.5" y="288.5" width="226" height="82" fill="none" stroke="#ffffff" stroke-opacity="0.2" stroke-width="1"/>
<text x="310.6" y="306.1" font-family="Liberation Sans" font-size="15" fill="#0f0f28" font-weight="normal" text-anchor="start" textLength="180.7" lengthAdjust="spacingAndGlyphs" >Move the pointer to desired</text>
<text x="310.6" y="324.9" font-family="Liberation Sans" font-size="15" fill="#0f0f28" font-weight="normal" text-anchor="start" textLength="164.3" lengthAdjust="spacingAndGlyphs" >position (like End Point in</text>
<text x="310.6" y="344" font-family="Liberation Sans" font-size="15" fill="#0f0f28" font-weight="normal" text-anchor="start" textLength="190.8" lengthAdjust="spacingAndGlyphs" >image), click to finish drawing</text>
<text x="310.6" y="363.3" font-family="Liberation Sans" font-size="15" fill="#0f0f28" font-weight="normal" text-anchor="start" textLength="206" lengthAdjust="spacingAndGlyphs" >the segment attach to the piece</text>
<circle cx="68.8" cy="153.8" r="15" fill="url(#gr)" filter="url(#sh)"/>
<text x="60.5" y="162" font-family="Liberation Sans" font-weight="bold" font-size="22" fill="#fff" stroke="#fff" stroke-width="3" stroke-linejoin="round" textLength="16.5" lengthAdjust="spacingAndGlyphs">A</text>
<text x="60.5" y="162" font-family="Liberation Sans" font-weight="bold" font-size="22" fill="#c01818" textLength="16.5" lengthAdjust="spacingAndGlyphs">A</text>
<circle cx="303.8" cy="159.4" r="15" fill="url(#gg)" filter="url(#sh)"/>
<text x="298" y="167" font-family="Liberation Sans" font-weight="bold" font-size="22" fill="#fff" stroke="#fff" stroke-width="3" stroke-linejoin="round" textLength="12.5" lengthAdjust="spacingAndGlyphs">B</text>
<text x="298" y="167" font-family="Liberation Sans" font-weight="bold" font-size="22" fill="#c01818" textLength="12.5" lengthAdjust="spacingAndGlyphs">B</text>
<circle cx="278.6" cy="326.3" r="15" fill="url(#go)" filter="url(#sh)"/>
<text x="270.8" y="334.6" font-family="Liberation Sans" font-weight="bold" font-size="24" fill="#fff" stroke="#fff" stroke-width="3" stroke-linejoin="round" textLength="14" lengthAdjust="spacingAndGlyphs">C</text>
<text x="270.8" y="334.6" font-family="Liberation Sans" font-weight="bold" font-size="24" fill="#c01818" textLength="14" lengthAdjust="spacingAndGlyphs">C</text>
<g shape-rendering="crispEdges">
<rect x="626" y="352" width="15" height="42" fill="#cdcdcd" />
<rect x="380" y="618" width="57" height="15" fill="#cdcdcd" />
<rect x="7.5" y="617.5" width="109" height="17" fill="#fff" stroke="#7a7a7a" stroke-width="1" />
</g>
<path d="M630.0,134.75L633.5,131.25L637.0,134.75" fill="none" stroke="#505050" stroke-width="2.1"/>
<path d="M630.0,607.25L633.5,610.75L637.0,607.25" fill="none" stroke="#505050" stroke-width="2.1"/>
<path d="M614.75,622.0L618.25,625.5L614.75,629.0" fill="none" stroke="#505050" stroke-width="2.1"/>
<path d="M104,625.0L108,629.0L112,625.0" fill="none" stroke="#404040" stroke-width="1"/>
<text x="32" y="630" font-family="Liberation Mono" font-size="12" fill="#000" font-weight="normal" text-anchor="start" textLength="43" lengthAdjust="spacingAndGlyphs" >29 1/3%</text>
<path d="M122,622H128.5V625H130V629.2H122Z" fill="none" stroke="#000" stroke-width="1.3"/>
<rect x="120.9" y="620.9" width="2.2" height="2.2" fill="#000"/>
<rect x="127.4" y="620.9" width="2.2" height="2.2" fill="#000"/>
<rect x="128.9" y="623.9" width="2.2" height="2.2" fill="#000"/>
<rect x="128.9" y="628.1" width="2.2" height="2.2" fill="#000"/>
<rect x="120.9" y="628.1" width="2.2" height="2.2" fill="#000"/>
<path d="M140,621H144.5L140,625.5Z M151,621H146.5L151,625.5Z M140,631H144.5L140,626.5Z M151,631H146.5L151,626.5Z" fill="#000"/>
<path d="M141.5,622.5L144.2,625.2M149.5,622.5L146.8,625.2M141.5,629.5L144.2,626.8M149.5,629.5L146.8,626.8" stroke="#000" stroke-width="1"/>
<path d="M158,632L162,628L164,629L167,625.5L170.5,629V632Z" fill="#000"/>
<path d="M177,632V626L180.5,623L183,625.5L186,622L189.5,626V632Z" fill="#000"/>
<path d="M202.25,622.5L198.75,626L202.25,629.5" fill="none" stroke="#505050" stroke-width="2.1"/>
<g shape-rendering="crispEdges">
<rect x="646" y="164" width="197" height="471" fill="#fff" />
<rect x="646" y="164" width="1" height="470" fill="#a0a0a0"/><rect x="646" y="164" width="196" height="1" fill="#a0a0a0"/>
<rect x="647" y="165" width="195" height="452" fill="#fff" />
<rect x="647" y="184" width="40" height="19" fill="#f4f4f4" />
<rect x="667" y="165" width="174" height="19" fill="#505050" />
<rect x="687" y="184" width="154" height="19" fill="#a0a0a0" />
<rect x="647" y="203" width="194" height="70" fill="#fff" />
<rect x="647" y="273" width="194" height="70" fill="#f4f4f4" />
<rect x="647" y="343" width="194" height="70" fill="#fff" />
<rect x="647" y="413" width="194" height="70" fill="#f4f4f4" />
<rect x="647" y="483" width="194" height="70" fill="#fff" />
<rect x="647" y="553" width="194" height="64" fill="#f4f4f4" />
<rect x="707" y="413" width="134" height="70" fill="#d3d3d3" />
<rect x="842" y="165" width="16" height="452" fill="#f0f0f0" />
<rect x="842" y="182" width="15" height="345" fill="#cdcdcd" />
<rect x="647" y="617" width="195" height="16" fill="#f0f0f0" />
<rect x="664" y="618" width="107" height="15" fill="#cdcdcd" />
<rect x="784.5" y="144.5" width="74" height="19" fill="#fff" stroke="#7a7a7a" stroke-width="1" />
</g>
<path d="M846.0,176.25L849.5,172.75L853.0,176.25" fill="none" stroke="#505050" stroke-width="2.1"/>
<path d="M846.0,607.25L849.5,610.75L853.0,607.25" fill="none" stroke="#505050" stroke-width="2.1"/>
<path d="M656.75,622.0L653.25,625.5L656.75,629.0" fill="none" stroke="#505050" stroke-width="2.1"/>
<path d="M831.25,622.0L834.75,625.5L831.25,629.0" fill="none" stroke="#505050" stroke-width="2.1"/>
<text x="645.8" y="137.8" font-family="Liberation Mono" font-size="11" fill="#000" font-weight="normal" text-anchor="start" textLength="59.5" lengthAdjust="spacingAndGlyphs" stroke="#000" stroke-width="0.15">Piece List</text>
<g shape-rendering="crispEdges">
<rect x="805" y="137" width="7" height="2" fill="#000" />
<path d="M827.5,130.5h5v5M825.5,133.5h5v5h-5z" fill="none" stroke="#000" stroke-width="1.2"/>
</g>
<path d="M845.5,131.5L852.5,138M852.5,131.5L845.5,138" stroke="#000" stroke-width="1.4"/>
<circle cx="843.5" cy="153" r="4" fill="none" stroke="#000" stroke-width="1.8"/><path d="M846.5,156L852,161" stroke="#000" stroke-width="2"/>
<g shape-rendering="crispEdges">
<rect x="655" y="150" width="1" height="1" fill="#000"/>
<rect x="657" y="150" width="1" height="1" fill="#000"/>
<rect x="659" y="150" width="1" height="1" fill="#000"/>
<rect x="653" y="152" width="1" height="1" fill="#000"/>
<rect x="653" y="154" width="1" height="1" fill="#000"/>
<rect x="653" y="156" width="1" height="1" fill="#000"/>
</g>
<path d="M655.6,154V158.6H660.5M661.6,157V152.4H658.5" fill="none" stroke="#000" stroke-width="1.4"/>
<rect x="676.9" y="150.8" width="6" height="5.6" fill="#fff" stroke="#000" stroke-width="1.5"/><rect x="678.9" y="152.8" width="5.6" height="5.6" fill="#fff" stroke="#000" stroke-width="1.5"/>
<rect x="699.2" y="150.1" width="6.6" height="6.1" fill="#606060"/><rect x="697.5" y="152.5" width="6" height="6" fill="#fff" stroke="#707070" stroke-width="1.2"/><path d="M706.5,156H711.5L709,159Z" fill="#909090"/>
<path d="M720,149H727L728.5,151.2L731.3,149.8L734,151.7L730.7,157.5V160H718V153H720Z" fill="#000"/><rect x="719.5" y="154.5" width="6" height="3.8" fill="#fff"/><rect x="725.5" y="157" width="4" height="1.3" fill="#fff"/>
<rect x="748" y="149" width="2" height="2" fill="#000"/><path d="M746.5,152.5h3v6M746,158.3h5.5" stroke="#000" stroke-width="1.5" fill="none"/>
<path d="M768,151.5h9M771,151.5v-1.5h3v1.5M769.5,153v5.5h6v-5.5M771.5,154.5v3M773.5,154.5v3" stroke="#000" stroke-width="1.2" fill="none"/>
<rect x="652.5" y="169.5" width="8" height="8" fill="#e8e8e8" stroke="#000" stroke-width="1" shape-rendering="crispEdges"/>
<rect x="654" y="173" width="5" height="1" fill="#000" shape-rendering="crispEdges"/>
<rect x="672.5" y="188.5" width="8" height="8" fill="#e8e8e8" stroke="#000" stroke-width="1" shape-rendering="crispEdges"/>
<rect x="674" y="192" width="5" height="1" fill="#000" shape-rendering="crispEdges"/>
<rect x="669" y="167" width="16" height="15" fill="#fff" shape-rendering="crispEdges"/>
<path d="M671.0,174.5Q677.0,168.5 683.0,174.5Q677.0,180.5 671.0,174.5Z" fill="none" stroke="#909090" stroke-width="1"/><circle cx="677.0" cy="174.5" r="2.3" fill="#909090"/>
<rect x="689" y="187" width="16" height="15" fill="#fff" shape-rendering="crispEdges"/>
<path d="M691.0,194.5Q697.0,188.5 703.0,194.5Q697.0,200.5 691.0,194.5Z" fill="none" stroke="#909090" stroke-width="1"/><circle cx="697.0" cy="194.5" r="2.3" fill="#909090"/>
<text x="689.5" y="178.7" font-family="Liberation Sans" font-size="12" fill="#fff" font-weight="bold" text-anchor="start" textLength="26" lengthAdjust="spacingAndGlyphs" >Plan</text>
<text x="709.7" y="197.4" font-family="Liberation Sans" font-size="12" fill="#000" font-weight="bold" text-anchor="start" textLength="58" lengthAdjust="spacingAndGlyphs" >Nameless</text>
<rect x="818" y="178" width="2" height="2" fill="#fff"/>
<rect x="822" y="178" width="2" height="2" fill="#fff"/>
<rect x="826" y="178" width="2" height="2" fill="#fff"/>
<rect x="818" y="197" width="2" height="2" fill="#fff"/>
<rect x="822" y="197" width="2" height="2" fill="#fff"/>
<rect x="826" y="197" width="2" height="2" fill="#fff"/>
<rect x="709.5" y="230.5" width="15" height="15" fill="#fff" stroke="#adadad" stroke-width="1" shape-rendering="crispEdges"/>
<text x="800.5" y="224" font-family="Liberation Mono" font-size="11" fill="#000" font-weight="normal" text-anchor="start" textLength="5" lengthAdjust="spacingAndGlyphs" >1</text>
<path d="M796,236H802.6L804.1,238.8L805.9,239.4L807.3,237L809.8,238.5V240.5L807.6,243H796Z" fill="#3a3a3a"/>
<rect x="709.5" y="300.5" width="15" height="15" fill="#fff" stroke="#adadad" stroke-width="1" shape-rendering="crispEdges"/>
<text x="800.5" y="294" font-family="Liberation Mono" font-size="11" fill="#000" font-weight="normal" text-anchor="start" textLength="5" lengthAdjust="spacingAndGlyphs" >2</text>
<path d="M796,306H802.6L804.1,308.8L805.9,309.4L807.3,307L809.8,308.5V310.5L807.6,313H796Z" fill="#3a3a3a"/>
<rect x="709.5" y="370.5" width="15" height="15" fill="#fff" stroke="#adadad" stroke-width="1" shape-rendering="crispEdges"/>
<text x="800.5" y="364" font-family="Liberation Mono" font-size="11" fill="#000" font-weight="normal" text-anchor="start" textLength="5" lengthAdjust="spacingAndGlyphs" >3</text>
<path d="M796,376H802.6L804.1,378.8L805.9,379.4L807.3,377L809.8,378.5V380.5L807.6,383H796Z" fill="#3a3a3a"/>
<rect x="709.5" y="440.5" width="15" height="15" fill="#fff" stroke="#a0a0a0" stroke-width="1" shape-rendering="crispEdges"/>
<path d="M711,448Q717,441 723,448Q717,454 711,448Z" fill="none" stroke="#000" stroke-width="1.3"/><circle cx="717" cy="448" r="2.2" fill="#000"/>
<text x="800.5" y="434" font-family="Liberation Mono" font-size="11" fill="#fff" font-weight="normal" text-anchor="start" textLength="5" lengthAdjust="spacingAndGlyphs" >4</text>
<path d="M796,446H802.6L804.1,448.8L805.9,449.4L807.3,447L809.8,448.5V450.5L807.6,453H796Z" fill="#f4f4f4"/>
<rect x="709.5" y="510.5" width="15" height="15" fill="#fff" stroke="#adadad" stroke-width="1" shape-rendering="crispEdges"/>
<text x="800.5" y="504" font-family="Liberation Mono" font-size="11" fill="#000" font-weight="normal" text-anchor="start" textLength="5" lengthAdjust="spacingAndGlyphs" >5</text>
<path d="M796,516H802.6L804.1,518.8L805.9,519.4L807.3,517L809.8,518.5V520.5L807.6,523H796Z" fill="#3a3a3a"/>
<rect x="709.5" y="580.5" width="15" height="15" fill="#fff" stroke="#adadad" stroke-width="1" shape-rendering="crispEdges"/>
<text x="800.5" y="574" font-family="Liberation Mono" font-size="11" fill="#000" font-weight="normal" text-anchor="start" textLength="5" lengthAdjust="spacingAndGlyphs" >6</text>
<path d="M796,586H802.6L804.1,588.8L805.9,589.4L807.3,587L809.8,588.5V590.5L807.6,593H796Z" fill="#3a3a3a"/>
<path d="M749,217C760,217 769,220 774,224L775.5,226V252L774,254C769,258 760,261 749,261C746,258 746,250 746,239C746,228 746,220 749,217Z" fill="#000"/>
<path d="M747.8,219.6Q761,221.6 773.5,226.4M747.8,222.4Q761,224.1 773.5,228.2M747.8,225.1Q761,226.6 773.5,230.0M747.8,227.9Q761,229.1 773.5,231.8M747.8,230.7Q761,231.5 773.5,233.6M747.8,233.5Q761,234.0 773.5,235.4M747.8,236.2Q761,236.5 773.5,237.2M747.8,239.0Q761,239.0 773.5,239.0M747.8,241.8Q761,241.5 773.5,240.8M747.8,244.5Q761,244.0 773.5,242.6M747.8,247.3Q761,246.5 773.5,244.4M747.8,250.1Q761,248.9 773.5,246.2M747.8,252.9Q761,251.4 773.5,248.0M747.8,255.6Q761,253.9 773.5,249.8M747.8,258.4Q761,256.4 773.5,251.6" stroke="#fff" stroke-width="0.85" fill="none"/>
<path d="M749,287C760,287 769,290 774,294L775.5,296V322L774,324C769,328 760,331 749,331C746,328 746,320 746,309C746,298 746,290 749,287Z" fill="#000"/>
<path d="M747.8,289.6Q761,291.6 773.5,296.4M747.8,292.4Q761,294.1 773.5,298.2M747.8,295.1Q761,296.6 773.5,300.0M747.8,297.9Q761,299.1 773.5,301.8M747.8,300.7Q761,301.5 773.5,303.6M747.8,303.5Q761,304.0 773.5,305.4M747.8,306.2Q761,306.5 773.5,307.2M747.8,309.0Q761,309.0 773.5,309.0M747.8,311.8Q761,311.5 773.5,310.8M747.8,314.5Q761,314.0 773.5,312.6M747.8,317.3Q761,316.5 773.5,314.4M747.8,320.1Q761,318.9 773.5,316.2M747.8,322.9Q761,321.4 773.5,318.0M747.8,325.6Q761,323.9 773.5,319.8M747.8,328.4Q761,326.4 773.5,321.6" stroke="#fff" stroke-width="0.85" fill="none"/>
<g fill="none" stroke="#000" stroke-width="1" shape-rendering="crispEdges">
<path d="M735.5,361.5L767.5,357.5V400.5L735.5,395.5Z"/>
<path d="M767.5,357.5C777,362 786,370 786,379C786,388 777,396 767.5,400.5"/>
</g>
<rect x="774" y="364" width="2" height="2" fill="#000"/><rect x="772" y="391" width="2" height="2" fill="#000"/>
<g fill="none" stroke="#000" stroke-width="1" shape-rendering="crispEdges">
<path d="M733.5,435.5V462.5M733.5,435.5L755.5,433.5C757,438 760,441 763.5,441.5L782.5,440.5L787.5,452.5L783.5,454.5L778.5,459.5V462.5M755.5,433.5L743.5,445.5"/>
<path d="M733.5,449.5H743.5M733.5,455.5L766,454.5L786.5,449.5M733.5,459.5H778.5"/>
</g>
<rect x="743" y="450" width="12" height="2" fill="#000"/><rect x="733" y="461" width="46" height="3" fill="#000"/>
<path d="M735,461.5h7M745,461.5h12M759,461.5h17" stroke="#d3d3d3" stroke-width="1" shape-rendering="crispEdges"/>
<g fill="none" stroke="#000" stroke-width="1" shape-rendering="crispEdges">
<path d="M739.5,497.5V540.5M739.5,497.5H757.5L758,500L763,502.5H773.5L778,501.5L780.5,507L780.5,528L778,537L773.5,535.5H763L757.5,538V540.5H739.5"/>
<path d="M780,509C776,512 773.5,515 773.5,518.5C773.5,522 776,525 780,528"/>
</g>
<rect x="740" y="509" width="17" height="1" fill="#000"/><rect x="745" y="509" width="8" height="2" fill="#000"/><rect x="740" y="527" width="17" height="2" fill="#000"/>
<path d="M741,518.5H780" stroke="#000" stroke-width="1" stroke-dasharray="1,2" shape-rendering="crispEdges"/>
<rect x="733.5" y="587.5" width="54" height="3" fill="#fff" stroke="#000" stroke-width="1.6" shape-rendering="crispEdges"/>
<path d="M747.5,587v4M773.5,587v4" stroke="#000" stroke-width="1" shape-rendering="crispEdges"/>
<rect x="840" y="226" width="1" height="1" fill="#c05020"/>
<rect x="840" y="296" width="1" height="1" fill="#c05020"/>
<rect x="840" y="366" width="1" height="1" fill="#c05020"/>
<rect x="840" y="436" width="1" height="1" fill="#c05020"/>
<rect x="840" y="506" width="1" height="1" fill="#c05020"/>
<rect x="840" y="576" width="1" height="1" fill="#c05020"/>
<text x="9.8" y="658.5" font-family="Liberation Sans" font-size="12" fill="#1c7a1c" font-weight="normal" text-anchor="start" textLength="54" lengthAdjust="spacingAndGlyphs" >Selection:</text>
<text x="68.5" y="658.5" font-family="Liberation Sans" font-size="12" fill="#000" font-weight="normal" text-anchor="start" textLength="197" lengthAdjust="spacingAndGlyphs" >select objects, Alt for whole piece;</text>
<rect x="409" y="644" width="1" height="21" fill="#d0d0d0"/>
<rect x="840" y="640" width="1" height="33" fill="#d0d0d0"/>
<text x="451.2" y="659.5" font-family="Liberation Sans" font-size="12" fill="#000" font-weight="normal" text-anchor="start" textLength="55.5" lengthAdjust="spacingAndGlyphs" >X:146.992</text>
<text x="527.8" y="659.5" font-family="Liberation Sans" font-size="12" fill="#000" font-weight="normal" text-anchor="start" textLength="47.4" lengthAdjust="spacingAndGlyphs" >Y:199.44</text>
<path d="M607,655v-1.8a2,2 0 0 1 4,0v1.8" fill="none" stroke="#000" stroke-width="1.2"/><rect x="605.8" y="655" width="6.4" height="5" fill="#000"/>
<text x="621" y="659.5" font-family="Liberation Sans" font-size="12" fill="#000" font-weight="normal" text-anchor="start" textLength="64.7" lengthAdjust="spacingAndGlyphs" >Medium:38</text>
<text x="697.6" y="659.5" font-family="Liberation Sans" font-size="12" fill="#000" font-weight="normal" text-anchor="start" textLength="37.7" lengthAdjust="spacingAndGlyphs" >Sizes:3</text>
<text x="773" y="659.5" font-family="Liberation Sans" font-size="12" fill="#000" font-weight="normal" text-anchor="start" textLength="43.2" lengthAdjust="spacingAndGlyphs" >Unit:cm</text>
<rect x="855" y="664" width="2" height="2" fill="#b8b8b8"/>
<rect x="852" y="667" width="2" height="2" fill="#b8b8b8"/>
<rect x="855" y="667" width="2" height="2" fill="#b8b8b8"/>
<rect x="849" y="670" width="2" height="2" fill="#b8b8b8"/>
<rect x="852" y="670" width="2" height="2" fill="#b8b8b8"/>
<rect x="855" y="670" width="2" height="2" fill="#b8b8b8"/>
<defs><filter id="ish" x="-30%" y="-30%" width="160%" height="160%"><feGaussianBlur in="SourceAlpha" stdDeviation="1.3"/><feOffset dx="1" dy="1.5"/><feComponentTransfer><feFuncA type="linear" slope="0.28"/></feComponentTransfer><feMerge><feMergeNode/><feMergeNode in="SourceGraphic"/></feMerge></filter></defs>
<g filter="url(#ish)">
<g fill="none" stroke="#000" stroke-width="1" stroke-linecap="butt">
<path d="M28.3,66L36.8,74.3L33,74.6L35.6,79.8L34.2,80.6L31.5,75.4L28.3,78.3Z" fill="#3a3a3a" stroke="#1a1a1a" stroke-width="0.6"/>
<circle cx="59.5" cy="69.3" r="6.2" stroke-width="1.1"/><path d="M57,66.8h5l-5,5h5" stroke-width="1.1"/><path d="M64,74L71.5,81.5" stroke-width="2.3"/>
<path d="M84.5,77.5L98.5,63.5L103,68L89,82Z" stroke-width="0.9"/><path d="M88,77l1.5,1.5M91,74l1.5,1.5M94,71l1.5,1.5M97,68l1.5,1.5" stroke-width="1"/>
</g>
<text x="117.5" y="80.5" font-family="Liberation Serif" font-size="21" fill="#000" font-weight="normal" text-anchor="start" textLength="14" lengthAdjust="spacingAndGlyphs" >T</text>
<g fill="none" stroke="#000" stroke-width="1.2">
<path d="M147,81.5L166,63.5"/><path d="M146,71.5H154V63" stroke-width="1.6"/><path d="M166,75H157.5V82" stroke-width="1.6"/>
<path d="M181.5,70.5A8.2,8.2 0 1 1 188.5,81.5"/><path d="M188.5,72V81" stroke-dasharray="1.2,1.2"/><path d="M177.5,71.5H185L181.3,76Z" fill="#000" stroke="none"/>
<rect x="209.5" y="65" width="3.5" height="7" stroke-width="1"/><path d="M213,68.5H217C220,68.5 222.5,70.5 222.5,73.5" stroke-width="1"/><path d="M219,74H226L222.5,77.5Z" fill="#000" stroke="none"/><rect x="218.5" y="77.5" width="8.5" height="4" stroke-width="1"/><path d="M210.5,77.5L215,81.5M215,77.5L210.5,81.5" stroke-width="0.9"/>
<rect x="240.5" y="64.5" width="3.8" height="7.5" stroke-width="1"/><path d="M246,69H250C252.5,69 253.8,70.5 253.8,72.5V77" stroke-width="1"/><path d="M244.5,69L248.5,65.5V72.5Z" fill="#000" stroke="none"/><rect x="249.5" y="77.5" width="8.5" height="4" stroke-width="1"/><path d="M241,75.5L243,78.5L245,75.5M243,78.5V81.5" stroke-width="0.9"/>
<path d="M270.5,81L288.5,63.5" stroke-dasharray="1.5,1.5" stroke-width="1"/><path d="M270.5,81H288.5" stroke-width="1.4"/><path d="M287.5,69V75" stroke-width="1.2"/><path d="M284,74.5H291L287.5,78Z" fill="#000" stroke="none"/><path d="M271,65L276,70.5M276,65L271,70.5" stroke-width="0.9"/><path d="M286.5,62.5l3,3M289.5,62.5l-3,3" stroke-width="0.8"/>
<rect x="269" y="79.5" width="3" height="3" fill="#000" stroke="none"/><rect x="287" y="79.5" width="3" height="3" fill="#000" stroke="none"/>
<path d="M302.5,65V82" stroke-width="1.4"/><path d="M302.5,82L319.5,65" stroke-dasharray="1.5,1.5"/><path d="M313.5,66H309" stroke-width="1.2"/><path d="M309.5,62.5V69.5L306,66Z" fill="#000" stroke="none"/><path d="M315,75.5L317.5,78.5L320,75.5M317.5,78.5V81.5" stroke-width="0.9"/><path d="M318,63.5l3,3M321,63.5l-3,3" stroke-width="0.8"/>
<rect x="301" y="63.5" width="3" height="3" fill="#000" stroke="none"/><rect x="301" y="80.5" width="3" height="3" fill="#000" stroke="none"/>
<path d="M332.5,81.5L350.5,63.5" stroke-width="1.1"/><path d="M332.5,63.5H350.5M332.5,63.5V81.5" stroke-dasharray="1.2,1.2" stroke-width="1.1"/><path d="M335.5,66.5L338.5,69.5" stroke-width="0.9"/><path d="M339.5,67.5V70.5H336.5Z" fill="#000" stroke="none"/>
<rect x="331" y="62" width="3" height="3" fill="#000" stroke="none"/><rect x="349" y="62" width="3" height="3" fill="#000" stroke="none"/><rect x="331" y="80" width="3" height="3" fill="#000" stroke="none"/><rect x="340" y="71" width="3" height="3" fill="#000" stroke="none"/>
</g>
<g fill="none" stroke="#000" stroke-width="1.1">
<ellipse cx="393" cy="72.6" rx="7.6" ry="8" stroke="#1a1a30" stroke-width="1.3" stroke-dasharray="2,1.2"/><path d="M397,65.2A7.5,7.5 0 0 1 397,80" stroke="#1a1a30" stroke-width="1.3" stroke-dasharray="2,1.2"/><path d="M389,72.6H395" stroke="#1a1a30" stroke-width="1.3"/><path d="M394.5,69.8L397.8,72.6L394.5,75.4Z" fill="#1a1a30" stroke="none"/><circle cx="385.4" cy="72.6" r="1.4" fill="#1a1a30" stroke="none"/><circle cx="393" cy="65" r="1.3" fill="#1a1a30" stroke="none"/><circle cx="393" cy="80.5" r="1.4" fill="#1a1a30" stroke="none"/><circle cx="400.5" cy="72.6" r="1.4" fill="#1a1a30" stroke="none"/><circle cx="404.3" cy="72.6" r="1.4" fill="#1a1a30" stroke="none"/>
<rect x="417.5" y="64.5" width="16.5" height="16" stroke-width="1.5"/>
<rect x="416.0" y="63.0" width="3" height="3" fill="#000" stroke="none"/>
<rect x="432.5" y="63.0" width="3" height="3" fill="#000" stroke="none"/>
<rect x="416.0" y="79.0" width="3" height="3" fill="#000" stroke="none"/>
<rect x="432.5" y="79.0" width="3" height="3" fill="#000" stroke="none"/>
<path d="M457.2,65.3L465,73.6L458.8,79.8H449.5L449,72.6Z" stroke-width="1.2"/>
<rect x="455.7" y="63.8" width="3" height="3" fill="#000" stroke="none"/>
<rect x="463.5" y="72.1" width="3" height="3" fill="#000" stroke="none"/>
<rect x="457.3" y="78.3" width="3" height="3" fill="#000" stroke="none"/>
<rect x="448.0" y="78.3" width="3" height="3" fill="#000" stroke="none"/>
<rect x="447.5" y="71.1" width="3" height="3" fill="#000" stroke="none"/>
<path d="M481,81L496.5,66.5" stroke="#1a4a9a" stroke-width="1.3"/><rect x="479.5" y="79.5" width="3" height="3" fill="#1a4a9a" stroke="none"/><rect x="495" y="65" width="3" height="3" fill="#1a4a9a" stroke="none"/>
<path d="M509,82L528,63" stroke-dasharray="1.2,1.6"/><path d="M509,82C520,81 528,74 528,63" stroke-dasharray="2.5,1.2" stroke-width="1.3"/><path d="M525,67L528.5,62L530,67.5Z" fill="#000" stroke="none"/><path d="M511,70.5H516.5V65.5" stroke-width="1.6"/><rect x="507.5" y="80.5" width="3" height="3" fill="#000" stroke="none"/>
<path d="M551,63.5H542.5V82.5H560" stroke-width="1.5"/><path d="M544,65C548,66 551,68 551,70C548,73 545,74 546,77C548,80 551,80 553,81" stroke-dasharray="2,1"/><path d="M549,78L559,67.5L561,69.5L551,80Z" stroke-width="1.1"/><path d="M551,76l7,-7.5" stroke-width="0.8"/>
<path d="M572.5,64.5H587L590.5,72.5" stroke-width="1.2"/><path d="M570.5,72.5H583.5L587.8,80.2" stroke-dasharray="1.2,1.2" stroke-width="1.2"/>
<rect x="571.0" y="63.0" width="3" height="3" fill="#000" stroke="none"/>
<rect x="585.5" y="63.0" width="3" height="3" fill="#000" stroke="none"/>
<rect x="589.0" y="71.0" width="3" height="3" fill="#000" stroke="none"/>
<rect x="569.0" y="71.0" width="3" height="3" fill="#000" stroke="none"/>
<rect x="582.0" y="71.0" width="3" height="3" fill="#000" stroke="none"/>
<rect x="586.3" y="78.7" width="3" height="3" fill="#000" stroke="none"/>
<circle cx="611.6" cy="72.5" r="9.5" stroke-width="1.3" stroke-dasharray="6,1"/><circle cx="611.6" cy="72.5" r="6.5" stroke-width="1.3" stroke-dasharray="4,1"/><circle cx="611.6" cy="72.5" r="3.2" stroke-width="1.3"/><circle cx="611.6" cy="72.5" r="1" fill="#000"/>
</g>
<g fill="none" stroke="#000" stroke-width="1.2">
<path d="M667.5,64V70"/><path d="M664,69.5H671L667.5,73Z" fill="#000" stroke="none"/><circle cx="667" cy="80" r="1.8" fill="#000" stroke="none"/>
<path d="M700.5,63V69"/><path d="M697,68.5H704L700.5,72Z" fill="#000" stroke="none"/><path d="M692,70.5L705,82.5M706,72.5L696,82" stroke-width="1"/><circle cx="700" cy="78" r="1.8" fill="#000" stroke="none"/>
<path d="M721.5,64V80" stroke-dasharray="1.2,1.2"/><path d="M721.5,80.5H738.5" stroke-width="1.3"/><path d="M724,74.5H730"/><path d="M729.5,71.5L733,74.5L729.5,77.5Z" fill="#000" stroke="none"/><rect x="720" y="79" width="3" height="3" fill="#000" stroke="none"/><rect x="737" y="79" width="3" height="3" fill="#000" stroke="none"/>
<path d="M750.5,72.5H771.3" stroke-dasharray="1.2,1.2"/><path d="M761,66V71M759,74V79" stroke-width="1.1"/><path d="M763.5,72.5L760,70V75Z" fill="#000" stroke="none"/><rect x="749" y="71" width="3" height="3" fill="#000" stroke="none"/><rect x="770" y="71" width="3" height="3" fill="#000" stroke="none"/>
<path d="M782.5,63.5V81.5H800.5M782.5,81.5L800.5,63.5" stroke-dasharray="1.2,1.2"/><path d="M793,65.5H788"/><path d="M788.5,62.5V68.5L785.5,65.5Z" fill="#000" stroke="none"/><path d="M798.5,70V76"/><path d="M795.5,75.5H801.5L798.5,78.5Z" fill="#000" stroke="none"/>
<rect x="781.0" y="62.0" width="3" height="3" fill="#000" stroke="none"/>
<rect x="799.0" y="62.0" width="3" height="3" fill="#000" stroke="none"/>
<rect x="781.0" y="80.0" width="3" height="3" fill="#000" stroke="none"/>
<rect x="799.0" y="80.0" width="3" height="3" fill="#000" stroke="none"/>
</g>
<g fill="none" stroke="#000" stroke-width="1.2">
<path d="M21.6,101.6C25,104 27,105.4 30.3,105.4C34,105.4 38,101.5 41.8,100.5" stroke-dasharray="1.4,1.2"/><path d="M21,106C25,108.5 27,109.8 30,109.8C34,109.8 38,105.5 41.8,104.9" stroke-width="1.5"/><path d="M28.7,97.2L31.5,100" /><path d="M33,98V101.5H29.5Z" fill="#000" stroke="none"/><path d="M22.1,115.8L25.5,112.2"/><path d="M24,110.5H27.5V114Z" fill="#000" stroke="none"/><path d="M40.7,113.6L37.5,110.5"/><path d="M35.5,109H39V112.5Z" fill="#000" stroke="none"/><path d="M32.2,109.5L31.4,116.4" stroke-width="1.5"/>
<path d="M53.9,100V117M71.4,100V117" stroke-dasharray="1.2,1.2"/><path d="M58.2,99V117M68.6,99V117"/><path d="M63.7,101V114"/><path d="M60.5,102H67L63.7,98.5Z M60.5,113H67L63.7,117Z" fill="#000" stroke="none"/><path d="M52.5,99L54,100.5M57,99L58.2,100.5M70,99L68.6,100.5M73.5,99L71.4,100.5" stroke-width="0.9"/>
<path d="M85,117L102.6,99.4" stroke-dasharray="2,1.5"/><path d="M92,98.5H98L95,102.5Z" fill="#000" stroke="none"/><path d="M87,102.5V108.5L91.5,105.5Z" fill="#000" stroke="none"/><rect x="92.5" y="107.5" width="2.5" height="2.5" fill="#000" stroke="none"/><rect x="97" y="103" width="2.5" height="2.5" fill="#000" stroke="none"/><rect x="88" y="112" width="2.5" height="2.5" fill="#000" stroke="none"/><rect x="101" y="98.5" width="2.5" height="2.5" fill="#000" stroke="none"/>
<path d="M116.5,115L123,98.4" stroke-dasharray="1.2,1.2"/><path d="M123,98.4C128,97 132,101 132.3,107"/><path d="M130,105.5H135L132.5,108.5Z" fill="#000" stroke="none"/><path d="M116.5,115L132.3,110.5" stroke-width="1.3"/><rect x="115" y="113.5" width="3" height="3" fill="#000" stroke="none"/><rect x="131" y="109" width="3" height="3" fill="#000" stroke="none"/><rect x="121.5" y="97" width="3" height="3" fill="#000" stroke="none"/>
<path d="M154.6,97.6H165.4V107.7" stroke-width="1.4"/><path d="M158,101L163,101V106Z" fill="#000" stroke="none"/><path d="M146,106.3H156.1V115.6" stroke-dasharray="1.2,1.2"/><rect x="145" y="105" width="2.5" height="2.5" stroke-width="0.8"/><rect x="155" y="105" width="2.5" height="2.5" stroke-width="0.8"/><rect x="155" y="114.5" width="2.5" height="2.5" stroke-width="0.8"/><path d="M148.5,110.5L153,110.5L153,115Z" stroke-width="0.9"/><rect x="153" y="96" width="3" height="3" fill="#000" stroke="none"/><rect x="164" y="106" width="3" height="3" fill="#000" stroke="none"/>
<path d="M176.2,104.8L179.8,101.2L188.5,97.6L197.8,106.3L188.5,114.9L179.8,110.6Z" stroke-width="1.2"/><path d="M181,103.5H188L193,106.3L188,109.5H181Z" stroke-dasharray="1.2,1.2" stroke-width="1"/><path d="M186.5,100H191L188.8,102.5ZM186.5,112H191L188.8,109.5ZM193.5,104V109L196,106.5Z" fill="#000" stroke="none"/>
<path d="M216.7,99L225.4,108.6M210.7,105.4L219.9,114.6" stroke-dasharray="1.6,0.9" stroke-width="1.2"/><path d="M216.7,99L219.2,96.6M225.4,108.6L228.9,105.2M210.7,105.4L207.2,108.8M219.9,114.6L216.4,118" stroke-width="1.1"/><path d="M212.5,102.2H217.2L216.8,107Z M219.3,107.5L223.9,111.8H219.3Z" fill="#000" stroke="none"/><path d="M215,100.5L218,99.5L216.5,102.5Z M224,110.5L227,107L226.5,110.5Z M209,106.5L212.5,105L211.5,108Z M218.5,116.5L221.5,113L220.5,117Z" fill="#000" stroke="none"/>
</g>
<g fill="none" stroke="#000" stroke-width="1.2">
<path d="M252.7,116V98H270.7" stroke-width="1.5"/><path d="M270.7,98V116H252.7" stroke-dasharray="1.2,1.2"/><path d="M252.7,116L270.7,98"/><path d="M256.5,103L262,108.5" stroke-width="1"/><path d="M263.5,106V110H259.5Z" fill="#000" stroke="none"/>
<path d="M282.7,100.2H300.7M282.7,110.7H300.7" stroke-width="1.5"/><path d="M282.7,97V113M300.7,97V116" stroke-dasharray="1.2,1.2"/><path d="M300.7,110.7V116" stroke-width="1.3"/><path d="M291.7,104V108.5M289.5,106.5H294L291.7,103.5Z" stroke-width="1"/><rect x="281.2" y="98.7" width="3" height="3" fill="#000" stroke="none"/><rect x="299.2" y="98.7" width="3" height="3" fill="#000" stroke="none"/><rect x="281.2" y="109.2" width="3" height="3" fill="#000" stroke="none"/><rect x="299.2" y="109.2" width="3" height="3" fill="#000" stroke="none"/>
<path d="M312.6,107L330.6,98.3M312.6,107L330.6,114.8" stroke-width="1.1"/><path d="M330.6,98.3V114.8" stroke-dasharray="1.2,1.2"/><path d="M325,104.5V109.5M322.5,106H327.5L325,103Z" stroke-width="1"/><rect x="311" y="105.5" width="3" height="3" fill="#000" stroke="none"/><rect x="329" y="97" width="3" height="3" fill="#000" stroke="none"/><rect x="329" y="113.3" width="3" height="3" fill="#000" stroke="none"/>
<path d="M353,116L345.5,106.5C344,104 347,100.5 350,102L353,108M353,116L360.5,106.5C362,104 359,100.5 356,102L353,108" stroke-width="1.1"/><path d="M353,116L351,104M353,116L355,104" stroke-dasharray="1.2,1.2"/><path d="M356,99.5H352" stroke-width="1.1"/><path d="M352.5,97V102L349.5,99.5Z" fill="#000" stroke="none"/><rect x="351.5" y="114.5" width="3" height="3" fill="#000" stroke="none"/>
<path d="M374.5,101L385,116M377,100L386,114" stroke-width="1"/><path d="M378,100C380,98 383,97.5 386,98C392,99 395,101 394.7,104C394,109 389,113 385,116" stroke-dasharray="1.2,1.2"/><path d="M389,102.5H385"/><path d="M385.5,100V105L382.5,102.5Z" fill="#000" stroke="none"/><rect x="383.5" y="114.5" width="3" height="3" fill="#000" stroke="none"/>
<path d="M407.4,106.7L421.7,99.5M407.4,106.7H425.4M407.4,106.7L421.7,113" stroke-dasharray="1.2,1.2"/><path d="M421.7,99.5C424,101 425.4,104 425.4,106.7C425.4,109 424,111.5 421.7,113" stroke-width="1"/><path d="M407.4,101V111.5" stroke-width="1"/><path d="M419.5,96L423,101M418.5,117L423,111" stroke-width="1"/><rect x="406" y="105.2" width="3" height="3" fill="#000" stroke="none"/><rect x="420.2" y="98" width="3" height="3" fill="#000" stroke="none"/><rect x="420.2" y="111.5" width="3" height="3" fill="#000" stroke="none"/>
<path d="M437.4,97.5H455.4V116" stroke-width="1.3"/><path d="M438.9,102.5H450.9V113.7" stroke-dasharray="1.2,1.2"/><rect x="449.4" y="101" width="3" height="3" fill="#000" stroke="none"/>
<path d="M468.1,99.5H484.6L483.1,105.2L487.6,113.7" stroke-width="1.2"/><path d="M468.8,105.2H483.8" stroke-dasharray="1.2,1.2"/>
</g>
</g>
<rect x="6.5" y="2.5" width="853" height="673" fill="none" stroke="#66bb4f" stroke-width="1" />
</svg>
</body></html>
